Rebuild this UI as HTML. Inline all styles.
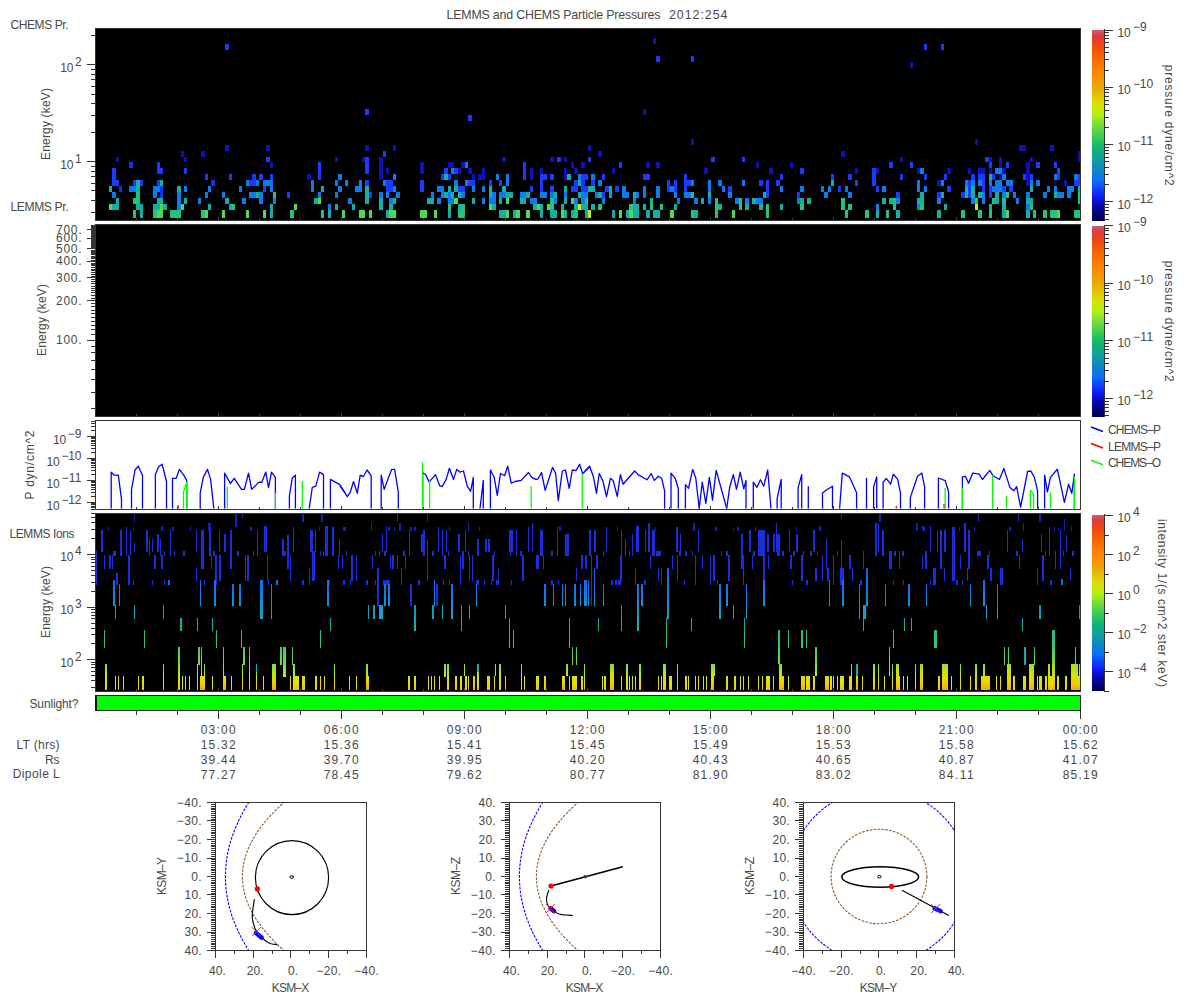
<!DOCTYPE html>
<html><head><meta charset="utf-8"><style>
html,body{margin:0;padding:0;background:#fff;width:1200px;height:1000px;overflow:hidden}
svg{display:block}
text{font-family:"Liberation Sans", sans-serif;}
</style></head><body>
<svg width="1200" height="1000" viewBox="0 0 1200 1000" shape-rendering="crispEdges">
<text x="446.5" y="18.8" font-size="12.4" textLength="214.0" lengthAdjust="spacing" fill="#484848">LEMMS and CHEMS Particle Pressures</text>
<text x="669.0" y="18.8" font-size="12.4" textLength="58.5" lengthAdjust="spacing" fill="#484848">2012:254</text>
<rect x="95" y="28" width="986" height="193" fill="#000"/>
<g shape-rendering="crispEdges">
<path fill="#12b0a4" d="M109 186h3v6h-3zM112 204h4v6h-4zM116 198h3v6h-3zM116 204h3v6h-3zM136 180h4v6h-4zM136 186h4v6h-4zM136 204h4v6h-4zM140 204h3v6h-3zM140 210h3v8h-3zM153 204h4v6h-4zM157 198h3v6h-3zM157 204h3v6h-3zM160 180h3v6h-3zM160 198h3v6h-3zM163 204h4v6h-4zM177 186h4v6h-4zM184 198h3v6h-3zM208 204h3v6h-3zM225 198h4v6h-4zM229 204h3v6h-3zM256 192h3v6h-3zM270 204h3v6h-3zM270 210h3v8h-3zM314 198h4v6h-4zM321 186h3v6h-3zM328 210h3v8h-3zM335 204h3v6h-3zM352 204h3v6h-3zM365 186h4v6h-4zM365 192h4v6h-4zM365 198h4v6h-4zM379 198h4v6h-4zM379 204h4v6h-4zM386 210h3v8h-3zM389 204h4v6h-4zM393 198h3v6h-3zM427 198h4v6h-4zM431 198h3v6h-3zM444 174h4v6h-4zM444 192h4v6h-4zM448 186h3v6h-3zM448 210h3v8h-3zM451 192h3v6h-3zM454 186h4v6h-4zM458 192h3v6h-3zM458 204h3v6h-3zM472 198h3v6h-3zM489 186h3v6h-3zM489 192h3v6h-3zM492 204h4v6h-4zM499 198h3v6h-3zM499 210h3v8h-3zM502 186h4v6h-4zM502 210h4v8h-4zM506 192h3v6h-3zM509 192h4v6h-4zM513 210h3v8h-3zM520 198h3v6h-3zM523 198h3v6h-3zM526 192h4v6h-4zM533 204h4v6h-4zM540 204h3v6h-3zM540 210h3v8h-3zM550 210h4v8h-4zM554 192h3v6h-3zM554 210h3v8h-3zM561 204h3v6h-3zM564 186h3v6h-3zM564 198h3v6h-3zM564 210h3v8h-3zM567 174h4v6h-4zM571 210h3v8h-3zM574 204h4v6h-4zM578 180h3v6h-3zM578 192h3v6h-3zM581 204h4v6h-4zM585 204h3v6h-3zM585 210h3v8h-3zM588 186h3v6h-3zM591 186h4v6h-4zM591 204h4v6h-4zM598 192h4v6h-4zM609 186h3v6h-3zM609 192h3v6h-3zM612 210h3v8h-3zM626 210h3v8h-3zM633 192h3v6h-3zM633 204h3v6h-3zM633 210h3v8h-3zM636 204h3v6h-3zM636 210h3v8h-3zM643 204h3v6h-3zM646 210h4v8h-4zM650 198h3v6h-3zM653 210h3v8h-3zM656 210h4v8h-4zM674 204h3v6h-3zM694 210h4v8h-4zM701 198h3v6h-3zM708 192h3v6h-3zM718 204h4v6h-4zM745 204h4v6h-4zM752 198h4v6h-4zM759 204h4v6h-4zM763 192h3v6h-3zM780 204h3v6h-3zM800 198h4v6h-4zM807 198h4v6h-4zM831 180h3v6h-3zM876 210h3v8h-3zM882 198h4v6h-4zM889 198h4v6h-4zM896 210h4v8h-4zM917 198h3v6h-3zM920 192h4v6h-4zM920 198h4v6h-4zM937 210h4v8h-4zM941 192h3v6h-3zM944 204h3v6h-3zM965 186h3v6h-3zM965 192h3v6h-3zM971 186h4v6h-4zM971 192h4v6h-4zM978 192h4v6h-4zM989 174h3v6h-3zM989 204h3v6h-3zM995 192h4v6h-4zM995 198h4v6h-4zM1002 204h4v6h-4zM1002 210h4v8h-4zM1026 198h4v6h-4zM1026 210h4v8h-4zM1030 186h3v6h-3zM1030 198h3v6h-3zM1054 192h3v6h-3zM1078 186h2v6h-2z"/>
<path fill="#50d850" d="M109 204h3v6h-3zM157 210h3v8h-3zM160 204h3v6h-3zM160 210h3v8h-3zM181 204h3v6h-3zM205 210h3v8h-3zM222 210h3v8h-3zM246 210h3v8h-3zM263 210h3v8h-3zM294 204h3v6h-3zM318 198h3v6h-3zM342 210h3v8h-3zM359 210h3v8h-3zM362 210h3v8h-3zM369 210h3v8h-3zM389 210h4v8h-4zM393 210h3v8h-3zM420 210h4v8h-4zM424 210h3v8h-3zM434 210h3v8h-3zM454 198h4v6h-4zM489 204h3v6h-3zM506 198h3v6h-3zM506 210h3v8h-3zM516 210h4v8h-4zM526 210h4v8h-4zM537 204h3v6h-3zM547 204h3v6h-3zM561 210h3v8h-3zM571 198h3v6h-3zM619 210h3v8h-3zM629 210h4v8h-4zM670 210h4v8h-4zM732 210h3v8h-3zM1006 210h3v8h-3zM1057 210h3v8h-3z"/>
<path fill="#1a3aff" d="M112 168h4v6h-4zM112 174h4v6h-4zM112 180h4v6h-4zM116 180h3v6h-3zM133 180h3v6h-3zM140 180h3v6h-3zM157 162h3v6h-3zM157 168h3v6h-3zM157 180h3v6h-3zM160 168h3v6h-3zM184 168h3v6h-3zM205 174h3v6h-3zM225 44h4v6h-4zM229 174h3v6h-3zM249 180h3v6h-3zM252 174h4v6h-4zM252 180h4v6h-4zM259 174h4v6h-4zM263 186h3v6h-3zM266 157h4v5h-4zM270 174h3v6h-3zM287 192h3v6h-3zM318 162h3v6h-3zM318 168h3v6h-3zM318 174h3v6h-3zM365 157h4v5h-4zM365 162h4v6h-4zM365 168h4v6h-4zM365 180h4v6h-4zM365 109h4v6h-4zM369 192h3v6h-3zM383 151h3v6h-3zM386 180h3v6h-3zM386 186h3v6h-3zM389 180h4v6h-4zM389 186h4v6h-4zM420 180h4v6h-4zM420 186h4v6h-4zM441 174h3v6h-3zM444 168h4v6h-4zM448 174h3v6h-3zM454 168h4v6h-4zM458 186h3v6h-3zM461 186h4v6h-4zM468 180h4v6h-4zM468 115h4v6h-4zM472 180h3v6h-3zM489 180h3v6h-3zM499 180h3v6h-3zM523 162h3v6h-3zM523 168h3v6h-3zM523 174h3v6h-3zM530 186h3v6h-3zM540 174h3v6h-3zM540 180h3v6h-3zM540 186h3v6h-3zM543 174h4v6h-4zM550 174h4v6h-4zM550 186h4v6h-4zM557 157h4v5h-4zM571 186h3v6h-3zM574 180h4v6h-4zM574 186h4v6h-4zM581 174h4v6h-4zM581 180h4v6h-4zM581 186h4v6h-4zM585 174h3v6h-3zM585 186h3v6h-3zM588 157h3v5h-3zM591 180h4v6h-4zM602 174h3v6h-3zM602 192h3v6h-3zM605 186h4v6h-4zM615 186h4v6h-4zM619 162h3v6h-3zM643 174h3v6h-3zM646 174h4v6h-4zM656 56h4v6h-4zM667 180h3v6h-3zM667 186h3v6h-3zM674 180h3v6h-3zM674 186h3v6h-3zM684 174h3v6h-3zM684 180h3v6h-3zM684 186h3v6h-3zM687 180h4v6h-4zM691 56h3v6h-3zM711 157h4v5h-4zM728 186h4v6h-4zM742 157h3v5h-3zM759 180h4v6h-4zM766 180h3v6h-3zM766 186h3v6h-3zM766 192h3v6h-3zM776 180h4v6h-4zM780 174h3v6h-3zM797 192h3v6h-3zM800 168h4v6h-4zM831 174h3v6h-3zM838 186h3v6h-3zM848 174h4v6h-4zM855 180h3v6h-3zM872 168h4v6h-4zM872 174h4v6h-4zM872 180h4v6h-4zM876 186h3v6h-3zM889 162h4v6h-4zM896 192h4v6h-4zM900 174h3v6h-3zM910 162h3v6h-3zM924 174h3v6h-3zM924 44h3v6h-3zM937 192h4v6h-4zM941 44h3v6h-3zM944 174h3v6h-3zM947 186h4v6h-4zM961 192h4v6h-4zM968 180h3v6h-3zM968 186h3v6h-3zM968 192h3v6h-3zM971 174h4v6h-4zM978 174h4v6h-4zM982 174h3v6h-3zM982 180h3v6h-3zM982 186h3v6h-3zM985 157h4v5h-4zM989 162h3v6h-3zM989 186h3v6h-3zM989 192h3v6h-3zM992 174h3v6h-3zM1002 186h4v6h-4zM1006 162h3v6h-3zM1009 186h4v6h-4zM1023 174h3v6h-3zM1030 174h3v6h-3zM1036 162h4v6h-4zM1054 162h3v6h-3zM1057 168h3v6h-3zM1057 174h3v6h-3zM1074 180h4v6h-4zM1078 174h2v6h-2zM1078 180h2v6h-2z"/>
<path fill="#0a7cf0" d="M112 192h4v6h-4zM129 186h4v6h-4zM133 186h3v6h-3zM153 186h4v6h-4zM153 192h4v6h-4zM157 186h3v6h-3zM177 192h4v6h-4zM177 198h4v6h-4zM177 204h4v6h-4zM184 186h3v6h-3zM198 198h3v6h-3zM205 192h3v6h-3zM208 186h3v6h-3zM222 192h3v6h-3zM239 186h3v6h-3zM242 198h4v6h-4zM246 180h3v6h-3zM249 192h3v6h-3zM252 192h4v6h-4zM256 180h3v6h-3zM259 192h4v6h-4zM259 198h4v6h-4zM263 180h3v6h-3zM266 180h4v6h-4zM270 180h3v6h-3zM270 186h3v6h-3zM273 198h3v6h-3zM311 180h3v6h-3zM311 186h3v6h-3zM318 192h3v6h-3zM328 204h3v6h-3zM335 180h3v6h-3zM335 192h3v6h-3zM338 174h4v6h-4zM338 186h4v6h-4zM345 180h3v6h-3zM348 198h4v6h-4zM355 186h4v6h-4zM359 180h3v6h-3zM359 186h3v6h-3zM379 192h4v6h-4zM383 180h3v6h-3zM386 192h3v6h-3zM389 198h4v6h-4zM393 174h3v6h-3zM393 186h3v6h-3zM396 192h4v6h-4zM431 192h3v6h-3zM437 186h4v6h-4zM437 198h4v6h-4zM441 186h3v6h-3zM441 192h3v6h-3zM448 192h3v6h-3zM448 198h3v6h-3zM451 168h3v6h-3zM451 198h3v6h-3zM454 180h4v6h-4zM461 192h4v6h-4zM465 162h3v6h-3zM465 180h3v6h-3zM472 186h3v6h-3zM482 186h3v6h-3zM482 198h3v6h-3zM489 198h3v6h-3zM492 192h4v6h-4zM492 198h4v6h-4zM496 174h3v6h-3zM499 192h3v6h-3zM502 192h4v6h-4zM506 174h3v6h-3zM506 180h3v6h-3zM520 192h3v6h-3zM523 192h3v6h-3zM530 198h3v6h-3zM533 198h4v6h-4zM540 192h3v6h-3zM543 192h4v6h-4zM550 192h4v6h-4zM554 198h3v6h-3zM564 192h3v6h-3zM574 198h4v6h-4zM578 174h3v6h-3zM581 192h4v6h-4zM581 198h4v6h-4zM585 192h3v6h-3zM591 174h4v6h-4zM595 192h3v6h-3zM598 180h4v6h-4zM602 198h3v6h-3zM622 186h4v6h-4zM622 192h4v6h-4zM626 192h3v6h-3zM633 198h3v6h-3zM636 192h3v6h-3zM643 186h3v6h-3zM643 192h3v6h-3zM656 186h4v6h-4zM656 192h4v6h-4zM670 186h4v6h-4zM674 192h3v6h-3zM677 198h3v6h-3zM684 192h3v6h-3zM687 192h4v6h-4zM691 180h3v6h-3zM694 198h4v6h-4zM708 180h3v6h-3zM708 186h3v6h-3zM708 198h3v6h-3zM718 180h4v6h-4zM722 186h3v6h-3zM728 192h4v6h-4zM735 198h4v6h-4zM742 180h3v6h-3zM745 198h4v6h-4zM756 198h3v6h-3zM759 198h4v6h-4zM780 186h3v6h-3zM797 198h3v6h-3zM800 186h4v6h-4zM821 186h3v6h-3zM824 192h4v6h-4zM828 186h3v6h-3zM845 186h3v6h-3zM848 192h4v6h-4zM876 204h3v6h-3zM882 186h4v6h-4zM896 198h4v6h-4zM917 180h3v6h-3zM917 186h3v6h-3zM917 204h3v6h-3zM920 168h4v6h-4zM924 186h3v6h-3zM937 198h4v6h-4zM941 180h3v6h-3zM965 180h3v6h-3zM971 180h4v6h-4zM971 198h4v6h-4zM978 180h4v6h-4zM982 192h3v6h-3zM982 198h3v6h-3zM989 180h3v6h-3zM992 186h3v6h-3zM995 168h4v6h-4zM995 180h4v6h-4zM995 186h4v6h-4zM999 168h3v6h-3zM999 180h3v6h-3zM999 186h3v6h-3zM1002 174h4v6h-4zM1002 192h4v6h-4zM1006 180h3v6h-3zM1009 180h4v6h-4zM1013 192h3v6h-3zM1016 198h3v6h-3zM1026 192h4v6h-4zM1026 204h4v6h-4zM1030 180h3v6h-3zM1036 180h4v6h-4zM1043 192h4v6h-4zM1047 186h3v6h-3zM1054 174h3v6h-3zM1054 186h3v6h-3zM1057 192h3v6h-3zM1060 192h4v6h-4zM1067 186h4v6h-4zM1067 192h4v6h-4zM1071 186h3v6h-3zM1074 174h4v6h-4z"/>
<path fill="#1010b8" d="M116 157h3v5h-3zM181 151h3v6h-3zM184 157h3v5h-3zM201 151h4v6h-4zM225 145h4v6h-4zM266 145h4v6h-4zM270 162h3v6h-3zM307 174h4v6h-4zM335 157h3v5h-3zM362 157h3v5h-3zM365 145h4v6h-4zM379 157h4v5h-4zM379 162h4v6h-4zM379 168h4v6h-4zM379 174h4v6h-4zM386 168h3v6h-3zM393 145h3v6h-3zM420 162h4v6h-4zM420 168h4v6h-4zM448 162h3v6h-3zM451 162h3v6h-3zM458 168h3v6h-3zM461 162h4v6h-4zM468 168h4v6h-4zM472 174h3v6h-3zM478 174h4v6h-4zM482 168h3v6h-3zM482 174h3v6h-3zM502 157h4v5h-4zM530 168h3v6h-3zM530 174h3v6h-3zM540 168h3v6h-3zM550 157h4v5h-4zM564 157h3v5h-3zM564 168h3v6h-3zM564 174h3v6h-3zM571 162h3v6h-3zM574 168h4v6h-4zM581 162h4v6h-4zM588 145h3v6h-3zM598 151h4v6h-4zM612 168h3v6h-3zM643 109h3v6h-3zM646 162h4v6h-4zM653 38h3v6h-3zM656 162h4v6h-4zM691 139h3v6h-3zM704 168h4v6h-4zM756 162h3v6h-3zM769 168h4v6h-4zM790 162h3v6h-3zM841 151h4v6h-4zM855 168h3v6h-3zM876 168h3v6h-3zM900 157h3v5h-3zM910 62h3v6h-3zM917 168h3v6h-3zM937 180h4v6h-4zM947 168h4v6h-4zM968 168h3v6h-3zM975 139h3v6h-3zM978 168h4v6h-4zM982 168h3v6h-3zM989 157h3v5h-3zM989 168h3v6h-3zM999 157h3v5h-3zM999 162h3v6h-3zM999 174h3v6h-3zM1002 168h4v6h-4zM1019 145h4v6h-4zM1023 145h3v6h-3zM1026 162h4v6h-4zM1026 168h4v6h-4zM1026 174h4v6h-4zM1026 180h4v6h-4zM1030 157h3v5h-3zM1050 145h4v6h-4zM1064 180h3v6h-3zM1078 151h2v6h-2zM1078 157h2v5h-2z"/>
<path fill="#1430f0" d="M119 186h3v6h-3zM129 162h4v6h-4zM160 186h3v6h-3zM160 192h3v6h-3zM211 180h4v6h-4z"/>
<path fill="#20c47c" d="M133 198h3v6h-3zM133 210h3v8h-3zM136 192h4v6h-4zM136 198h4v6h-4zM153 210h4v8h-4zM170 210h4v8h-4zM174 210h3v8h-3zM177 210h4v8h-4zM201 210h4v8h-4zM232 204h3v6h-3zM273 192h3v6h-3zM290 210h4v8h-4zM321 210h3v8h-3zM448 204h3v6h-3zM458 210h3v8h-3zM461 204h4v6h-4zM461 210h4v8h-4zM550 198h4v6h-4zM550 204h4v6h-4zM574 210h4v8h-4zM585 198h3v6h-3zM598 204h4v6h-4zM629 204h4v6h-4zM650 204h3v6h-3zM660 204h3v6h-3zM691 192h3v6h-3zM691 210h3v8h-3zM715 198h3v6h-3zM715 204h3v6h-3zM715 210h3v8h-3zM739 198h3v6h-3zM739 204h3v6h-3zM766 204h3v6h-3zM766 210h3v8h-3zM800 204h4v6h-4zM841 198h4v6h-4zM841 204h4v6h-4zM845 210h3v8h-3zM848 204h4v6h-4zM865 210h4v8h-4zM886 210h3v8h-3zM893 198h3v6h-3zM893 204h3v6h-3zM920 204h4v6h-4zM961 210h4v8h-4zM975 198h3v6h-3zM978 210h4v8h-4zM989 210h3v8h-3zM992 198h3v6h-3zM1002 198h4v6h-4zM1006 192h3v6h-3zM1030 204h3v6h-3zM1033 210h3v8h-3zM1043 210h4v8h-4zM1050 210h4v8h-4zM1054 210h3v8h-3zM1074 210h4v8h-4zM1078 192h2v6h-2zM1078 198h2v6h-2zM1078 210h2v8h-2z"/>
<path fill="#c0f010" d="M578 204h3v6h-3zM588 210h3v8h-3zM975 204h3v6h-3z"/>
</g>
<rect x="95.5" y="28.5" width="985" height="192" fill="none" stroke="#333"/>
<line x1="91" y1="212.5" x2="95" y2="212.5" stroke="#333" stroke-width="1"/>
<line x1="91" y1="200.5" x2="95" y2="200.5" stroke="#333" stroke-width="1"/>
<line x1="91" y1="190.5" x2="95" y2="190.5" stroke="#333" stroke-width="1"/>
<line x1="91" y1="183.5" x2="95" y2="183.5" stroke="#333" stroke-width="1"/>
<line x1="91" y1="176.5" x2="95" y2="176.5" stroke="#333" stroke-width="1"/>
<line x1="91" y1="171.5" x2="95" y2="171.5" stroke="#333" stroke-width="1"/>
<line x1="91" y1="166.5" x2="95" y2="166.5" stroke="#333" stroke-width="1"/>
<line x1="87" y1="161.5" x2="95" y2="161.5" stroke="#333" stroke-width="1"/>
<line x1="91" y1="132.5" x2="95" y2="132.5" stroke="#333" stroke-width="1"/>
<line x1="91" y1="115.5" x2="95" y2="115.5" stroke="#333" stroke-width="1"/>
<line x1="91" y1="103.5" x2="95" y2="103.5" stroke="#333" stroke-width="1"/>
<line x1="91" y1="94.5" x2="95" y2="94.5" stroke="#333" stroke-width="1"/>
<line x1="91" y1="86.5" x2="95" y2="86.5" stroke="#333" stroke-width="1"/>
<line x1="91" y1="79.5" x2="95" y2="79.5" stroke="#333" stroke-width="1"/>
<line x1="91" y1="74.5" x2="95" y2="74.5" stroke="#333" stroke-width="1"/>
<line x1="91" y1="69.5" x2="95" y2="69.5" stroke="#333" stroke-width="1"/>
<line x1="87" y1="64.5" x2="95" y2="64.5" stroke="#333" stroke-width="1"/>
<line x1="91" y1="35.5" x2="95" y2="35.5" stroke="#333" stroke-width="1"/>
<text x="60.2" y="71.8" font-size="12" textLength="13.2" lengthAdjust="spacing" fill="#484848">10</text>
<text x="75.0" y="65.8" font-size="12" textLength="5.3" lengthAdjust="spacing" fill="#484848">2</text>
<text x="60.2" y="168.6" font-size="12" textLength="13.2" lengthAdjust="spacing" fill="#484848">10</text>
<text x="75.0" y="162.6" font-size="12" textLength="5.3" lengthAdjust="spacing" fill="#484848">1</text>
<text x="50.0" y="124.0" font-size="12" text-anchor="middle" textLength="72.0" lengthAdjust="spacing" transform="rotate(-90 50 124)" fill="#484848">Energy (keV)</text>
<text x="10.5" y="29.3" font-size="12" textLength="58.0" lengthAdjust="spacing" fill="#484848">CHEMS Pr.</text>
<text x="10.5" y="211.3" font-size="12" textLength="58.0" lengthAdjust="spacing" fill="#484848">LEMMS Pr.</text>
<rect x="95" y="224" width="986" height="193" fill="#000"/>
<rect x="95.5" y="224.5" width="985" height="192" fill="none" stroke="#333"/>
<line x1="91" y1="408.5" x2="95" y2="408.5" stroke="#333" stroke-width="1"/>
<line x1="91" y1="392.5" x2="95" y2="392.5" stroke="#333" stroke-width="1"/>
<line x1="91" y1="379.5" x2="95" y2="379.5" stroke="#333" stroke-width="1"/>
<line x1="91" y1="369.5" x2="95" y2="369.5" stroke="#333" stroke-width="1"/>
<line x1="91" y1="360.5" x2="95" y2="360.5" stroke="#333" stroke-width="1"/>
<line x1="91" y1="352.5" x2="95" y2="352.5" stroke="#333" stroke-width="1"/>
<line x1="91" y1="346.5" x2="95" y2="346.5" stroke="#333" stroke-width="1"/>
<line x1="87" y1="340.5" x2="95" y2="340.5" stroke="#333" stroke-width="1"/>
<line x1="91" y1="334.5" x2="95" y2="334.5" stroke="#333" stroke-width="1"/>
<line x1="91" y1="329.5" x2="95" y2="329.5" stroke="#333" stroke-width="1"/>
<line x1="91" y1="325.5" x2="95" y2="325.5" stroke="#333" stroke-width="1"/>
<line x1="91" y1="321.5" x2="95" y2="321.5" stroke="#333" stroke-width="1"/>
<line x1="91" y1="317.5" x2="95" y2="317.5" stroke="#333" stroke-width="1"/>
<line x1="91" y1="313.5" x2="95" y2="313.5" stroke="#333" stroke-width="1"/>
<line x1="91" y1="310.5" x2="95" y2="310.5" stroke="#333" stroke-width="1"/>
<line x1="91" y1="306.5" x2="95" y2="306.5" stroke="#333" stroke-width="1"/>
<line x1="91" y1="303.5" x2="95" y2="303.5" stroke="#333" stroke-width="1"/>
<line x1="87" y1="300.5" x2="95" y2="300.5" stroke="#333" stroke-width="1"/>
<line x1="91" y1="298.5" x2="95" y2="298.5" stroke="#333" stroke-width="1"/>
<line x1="91" y1="295.5" x2="95" y2="295.5" stroke="#333" stroke-width="1"/>
<line x1="91" y1="292.5" x2="95" y2="292.5" stroke="#333" stroke-width="1"/>
<line x1="91" y1="290.5" x2="95" y2="290.5" stroke="#333" stroke-width="1"/>
<line x1="91" y1="288.5" x2="95" y2="288.5" stroke="#333" stroke-width="1"/>
<line x1="91" y1="286.5" x2="95" y2="286.5" stroke="#333" stroke-width="1"/>
<line x1="91" y1="283.5" x2="95" y2="283.5" stroke="#333" stroke-width="1"/>
<line x1="91" y1="281.5" x2="95" y2="281.5" stroke="#333" stroke-width="1"/>
<line x1="91" y1="279.5" x2="95" y2="279.5" stroke="#333" stroke-width="1"/>
<line x1="87" y1="277.5" x2="95" y2="277.5" stroke="#333" stroke-width="1"/>
<line x1="91" y1="276.5" x2="95" y2="276.5" stroke="#333" stroke-width="1"/>
<line x1="91" y1="274.5" x2="95" y2="274.5" stroke="#333" stroke-width="1"/>
<line x1="91" y1="272.5" x2="95" y2="272.5" stroke="#333" stroke-width="1"/>
<line x1="91" y1="270.5" x2="95" y2="270.5" stroke="#333" stroke-width="1"/>
<line x1="91" y1="269.5" x2="95" y2="269.5" stroke="#333" stroke-width="1"/>
<line x1="91" y1="267.5" x2="95" y2="267.5" stroke="#333" stroke-width="1"/>
<line x1="91" y1="265.5" x2="95" y2="265.5" stroke="#333" stroke-width="1"/>
<line x1="91" y1="264.5" x2="95" y2="264.5" stroke="#333" stroke-width="1"/>
<line x1="91" y1="263.5" x2="95" y2="263.5" stroke="#333" stroke-width="1"/>
<line x1="87" y1="261.5" x2="95" y2="261.5" stroke="#333" stroke-width="1"/>
<line x1="91" y1="260.5" x2="95" y2="260.5" stroke="#333" stroke-width="1"/>
<line x1="91" y1="258.5" x2="95" y2="258.5" stroke="#333" stroke-width="1"/>
<line x1="91" y1="257.5" x2="95" y2="257.5" stroke="#333" stroke-width="1"/>
<line x1="91" y1="256.5" x2="95" y2="256.5" stroke="#333" stroke-width="1"/>
<line x1="91" y1="254.5" x2="95" y2="254.5" stroke="#333" stroke-width="1"/>
<line x1="91" y1="253.5" x2="95" y2="253.5" stroke="#333" stroke-width="1"/>
<line x1="91" y1="252.5" x2="95" y2="252.5" stroke="#333" stroke-width="1"/>
<line x1="91" y1="251.5" x2="95" y2="251.5" stroke="#333" stroke-width="1"/>
<line x1="91" y1="250.5" x2="95" y2="250.5" stroke="#333" stroke-width="1"/>
<line x1="87" y1="248.5" x2="95" y2="248.5" stroke="#333" stroke-width="1"/>
<line x1="91" y1="247.5" x2="95" y2="247.5" stroke="#333" stroke-width="1"/>
<line x1="91" y1="246.5" x2="95" y2="246.5" stroke="#333" stroke-width="1"/>
<line x1="91" y1="245.5" x2="95" y2="245.5" stroke="#333" stroke-width="1"/>
<line x1="91" y1="244.5" x2="95" y2="244.5" stroke="#333" stroke-width="1"/>
<line x1="91" y1="243.5" x2="95" y2="243.5" stroke="#333" stroke-width="1"/>
<line x1="91" y1="242.5" x2="95" y2="242.5" stroke="#333" stroke-width="1"/>
<line x1="91" y1="241.5" x2="95" y2="241.5" stroke="#333" stroke-width="1"/>
<line x1="91" y1="240.5" x2="95" y2="240.5" stroke="#333" stroke-width="1"/>
<line x1="91" y1="239.5" x2="95" y2="239.5" stroke="#333" stroke-width="1"/>
<line x1="87" y1="238.5" x2="95" y2="238.5" stroke="#333" stroke-width="1"/>
<line x1="91" y1="237.5" x2="95" y2="237.5" stroke="#333" stroke-width="1"/>
<line x1="91" y1="236.5" x2="95" y2="236.5" stroke="#333" stroke-width="1"/>
<line x1="91" y1="235.5" x2="95" y2="235.5" stroke="#333" stroke-width="1"/>
<line x1="91" y1="234.5" x2="95" y2="234.5" stroke="#333" stroke-width="1"/>
<line x1="91" y1="234.5" x2="95" y2="234.5" stroke="#333" stroke-width="1"/>
<line x1="91" y1="233.5" x2="95" y2="233.5" stroke="#333" stroke-width="1"/>
<line x1="91" y1="232.5" x2="95" y2="232.5" stroke="#333" stroke-width="1"/>
<line x1="91" y1="231.5" x2="95" y2="231.5" stroke="#333" stroke-width="1"/>
<line x1="91" y1="230.5" x2="95" y2="230.5" stroke="#333" stroke-width="1"/>
<line x1="87" y1="229.5" x2="95" y2="229.5" stroke="#333" stroke-width="1"/>
<line x1="91" y1="229.5" x2="95" y2="229.5" stroke="#333" stroke-width="1"/>
<line x1="91" y1="228.5" x2="95" y2="228.5" stroke="#333" stroke-width="1"/>
<line x1="91" y1="227.5" x2="95" y2="227.5" stroke="#333" stroke-width="1"/>
<line x1="91" y1="226.5" x2="95" y2="226.5" stroke="#333" stroke-width="1"/>
<line x1="91" y1="225.5" x2="95" y2="225.5" stroke="#333" stroke-width="1"/>
<line x1="91" y1="225.5" x2="95" y2="225.5" stroke="#333" stroke-width="1"/>
<text x="81.5" y="344.1" font-size="12" text-anchor="end" textLength="25.5" lengthAdjust="spacing" fill="#484848">100.</text>
<text x="81.5" y="304.7" font-size="12" text-anchor="end" textLength="25.5" lengthAdjust="spacing" fill="#484848">200.</text>
<text x="81.5" y="281.7" font-size="12" text-anchor="end" textLength="25.5" lengthAdjust="spacing" fill="#484848">300.</text>
<text x="81.5" y="265.4" font-size="12" text-anchor="end" textLength="25.5" lengthAdjust="spacing" fill="#484848">400.</text>
<text x="81.5" y="252.7" font-size="12" text-anchor="end" textLength="25.5" lengthAdjust="spacing" fill="#484848">500.</text>
<text x="81.5" y="242.4" font-size="12" text-anchor="end" textLength="25.5" lengthAdjust="spacing" fill="#484848">600.</text>
<text x="81.5" y="233.6" font-size="12" text-anchor="end" textLength="25.5" lengthAdjust="spacing" fill="#484848">700.</text>
<text x="46.0" y="320.0" font-size="12" text-anchor="middle" textLength="72.0" lengthAdjust="spacing" transform="rotate(-90 46 320)" fill="#484848">Energy (keV)</text>
<rect x="95.5" y="420.5" width="985" height="89" fill="#fff" stroke="#333"/>
<g shape-rendering="auto" fill="none" stroke-width="1.3" stroke-linejoin="round">
<path d="M111.2,508.5 L111.2,472.1 L114.2,475.2 L118.3,475.2 L121.5,499.2 L121.5,508.5" stroke="#0000ff"/>
<path d="M131.5,508.5 L131.5,489.8 L135.0,470.0 L138.3,466.2 L142.5,475.2 L142.5,508.5" stroke="#0000ff"/>
<path d="M155.4,508.5 L155.4,474.6 L158.5,466.9 L162.1,464.2 L166.5,481.5 L166.5,508.5" stroke="#0000ff"/>
<path d="M172.5,508.5 L172.5,478.3 L176.2,478.3 L179.4,469.4 L183.5,474.6 L186.7,480.4 L186.7,508.5" stroke="#0000ff"/>
<path d="M200.2,508.5 L200.2,492.9 L203.3,477.3 L207.5,469.4 L210.6,479.4 L213.8,508.5" stroke="#0000ff"/>
<path d="M224.6,508.5 L224.6,473.1 L230.4,483.5 L234.2,478.3 L241.5,489.4 L244.4,489.4 L248.5,473.1 L251.7,489.4 L259.0,482.1 L261.7,482.5 L265.8,472.1 L268.5,487.7 L271.5,472.1 L275.4,477.3 L275.4,508.5" stroke="#0000ff"/>
<path d="M289.4,508.5 L289.4,496.0 L292.3,477.9 L295.4,475.2 L295.4,508.5" stroke="#0000ff"/>
<path d="M309.2,508.5 L312.3,487.3 L315.8,486.2 L319.6,472.1 L323.5,474.6 L323.5,508.5" stroke="#0000ff"/>
<path d="M330.4,508.5 L330.4,479.4 L339.8,484.6 L345.0,492.9" stroke="#0000ff"/>
<path d="M340.0,485.6 L347.3,496.7 L350.4,491.9 L353.5,481.5 L357.3,493.3 L360.2,475.2 L363.3,476.7 L367.1,470.0 L371.2,475.8 L371.2,508.5" stroke="#0000ff"/>
<path d="M381.2,508.5 L381.2,475.2 L384.2,489.4 L389.0,476.2 L391.7,469.4 L394.6,469.4 L398.3,491.9 L398.3,508.5" stroke="#0000ff"/>
<path d="M422.7,508.5 L422.7,472.7 L425.4,474.2 L429.2,482.1 L435.4,474.6 L439.6,485.6 L442.1,486.7 L446.2,479.4 L449.4,468.3 L453.5,479.4 L456.7,469.4 L459.8,472.1 L463.5,471.0 L467.1,485.6 L470.6,491.5 L473.3,477.3 L473.3,508.5" stroke="#0000ff"/>
<path d="M480.0,508.5 L483.3,480.4 L483.3,508.5" stroke="#0000ff"/>
<path d="M490.4,508.5 L490.4,470.0 L494.2,477.3 L497.3,495.4 L500.4,473.5 L504.6,475.8 L507.7,466.2 L511.2,483.1 L515.0,481.5 L521.2,480.4 L528.5,472.5 L531.7,477.3 L535.8,479.4 L537.9,479.0 L541.5,472.5 L545.2,490.4 L552.5,467.5 L555.6,473.1 L558.3,500.6 L562.3,471.0 L565.4,470.0 L569.2,488.3 L572.3,470.0 L576.0,470.6 L579.6,464.2 L582.7,473.8 L590.0,466.2" stroke="#0000ff"/>
<path d="M585.0,471.0 L589.6,466.2 L593.3,476.2 L596.5,493.3 L599.2,473.5 L602.7,480.4 L606.5,496.5 L610.4,478.3 L613.1,480.4 L617.3,496.5 L620.4,474.6 L623.1,484.2 L634.6,471.0 L638.1,474.6 L647.1,479.8 L651.2,473.5 L654.4,480.4 L658.3,476.2 L661.7,478.3 L664.6,490.8 L664.6,508.5" stroke="#0000ff"/>
<path d="M671.0,508.5 L671.0,473.1 L675.2,478.3 L678.3,488.8 L678.3,508.5" stroke="#0000ff"/>
<path d="M685.4,508.5 L685.4,484.6 L688.5,488.3 L692.7,469.4 L695.8,478.3 L699.2,508.5 L702.3,482.1 L705.8,503.3 L709.4,477.3 L712.5,500.2 L716.2,470.4 L726.7,508.5" stroke="#0000ff"/>
<path d="M726.7,508.5 L729.8,486.7 L733.3,474.6 L736.5,489.4 L740.2,472.1 L743.8,488.8 L746.0,480.4 L746.0,508.5" stroke="#0000ff"/>
<path d="M753.3,508.5 L753.3,482.1 L756.9,487.3 L760.4,479.8 L763.8,486.2 L767.7,470.0 L771.0,508.5" stroke="#0000ff"/>
<path d="M777.1,508.5 L777.1,498.8 L781.2,479.4 L781.2,508.5" stroke="#0000ff"/>
<path d="M798.1,508.5 L798.1,487.7 L801.7,474.6 L801.7,508.5" stroke="#0000ff"/>
<path d="M808.3,508.5 L808.3,486.2" stroke="#0000ff"/>
<path d="M822.5,508.5 L822.5,492.9 L826.7,489.8 L832.5,486.2 L832.5,508.5" stroke="#0000ff"/>
<path d="M839.6,508.5 L842.3,473.1 L849.5,476.9 L856.6,492.7 L856.6,508.5" stroke="#0000ff"/>
<path d="M866.5,508.5 L866.5,477.8" stroke="#0000ff"/>
<path d="M873.6,508.5 L873.6,486.9 L876.7,476.9 L876.7,508.5" stroke="#0000ff"/>
<path d="M883.1,508.5 L883.1,482.3 L886.3,478.4 L890.6,484.2 L893.3,474.2 L897.6,479.1 L900.5,493.3 L900.5,508.5" stroke="#0000ff"/>
<path d="M910.3,508.5 L910.3,497.6 L917.5,476.3 L921.8,473.1 L924.6,486.9 L924.6,508.5" stroke="#0000ff"/>
<path d="M938.4,508.5 L938.4,478.0 L945.2,480.6 L948.6,491.8 L948.6,508.5" stroke="#0000ff"/>
<path d="M962.4,508.5 L962.4,476.9 L965.4,476.3 L968.5,483.3 L972.8,473.1 L979.2,474.2 L982.4,479.5 L989.8,470.4 L993.0,475.7 L999.4,479.5 L1003.8,468.4 L1010.0,487.6 L1013.8,490.8 L1016.6,486.5 L1020.6,507.1 L1027.6,471.4 L1030.8,471.0 L1034.4,477.4 L1037.6,491.2 L1037.6,508.5" stroke="#0000ff"/>
<path d="M1044.6,508.5 L1044.6,475.2 L1047.4,491.8 L1050.4,477.4 L1057.4,469.3 L1064.4,502.4 L1068.6,484.2 L1071.8,493.3 L1074.4,474.2 L1074.4,508.5" stroke="#0000ff"/>
<path d="M178.3,508.5 L178.3,505.0" stroke="#ff0000"/>
<path d="M201.2,508.5 L201.2,507.9" stroke="#ff0000"/>
<path d="M896.3,508.5 L896.3,506.1" stroke="#ff0000"/>
<path d="M944.1,508.5 L944.1,503.9" stroke="#ff0000"/>
<path d="M183.5,508.5 L183.5,491.9 L186.7,482.5 L186.7,508.5" stroke="#00ff00"/>
<path d="M227.3,508.5 L227.3,486.7" stroke="#00ff00"/>
<path d="M275.4,508.5 L275.4,492.9" stroke="#00ff00"/>
<path d="M302.3,508.5 L302.3,481.0" stroke="#00ff00"/>
<path d="M422.5,508.5 L422.5,462.1" stroke="#00ff00"/>
<path d="M429.6,508.5 L429.6,479.4" stroke="#00ff00"/>
<path d="M531.2,508.5 L531.2,486.2" stroke="#00ff00"/>
<path d="M582.3,508.5 L582.3,473.8" stroke="#00ff00"/>
<path d="M945.2,508.5 L945.2,488.0" stroke="#00ff00"/>
<path d="M962.4,508.5 L962.4,488.0" stroke="#00ff00"/>
<path d="M992.6,508.5 L992.6,475.2" stroke="#00ff00"/>
<path d="M1006.4,508.5 L1006.4,495.9" stroke="#00ff00"/>
<path d="M1030.4,508.5 L1030.4,490.1 L1033.6,494.4 L1033.6,508.5" stroke="#00ff00"/>
<path d="M1050.4,508.5 L1050.4,492.2" stroke="#00ff00"/>
<path d="M1074.4,508.5 L1074.4,476.3" stroke="#00ff00"/>
</g>
<line x1="91" y1="509.5" x2="95" y2="509.5" stroke="#333" stroke-width="1"/>
<line x1="91" y1="507.5" x2="95" y2="507.5" stroke="#333" stroke-width="1"/>
<line x1="91" y1="506.5" x2="95" y2="506.5" stroke="#333" stroke-width="1"/>
<line x1="91" y1="504.5" x2="95" y2="504.5" stroke="#333" stroke-width="1"/>
<line x1="91" y1="503.5" x2="95" y2="503.5" stroke="#333" stroke-width="1"/>
<line x1="87" y1="502.5" x2="95" y2="502.5" stroke="#333" stroke-width="1"/>
<line x1="91" y1="496.5" x2="95" y2="496.5" stroke="#333" stroke-width="1"/>
<line x1="91" y1="492.5" x2="95" y2="492.5" stroke="#333" stroke-width="1"/>
<line x1="91" y1="489.5" x2="95" y2="489.5" stroke="#333" stroke-width="1"/>
<line x1="91" y1="487.5" x2="95" y2="487.5" stroke="#333" stroke-width="1"/>
<line x1="91" y1="485.5" x2="95" y2="485.5" stroke="#333" stroke-width="1"/>
<line x1="91" y1="484.5" x2="95" y2="484.5" stroke="#333" stroke-width="1"/>
<line x1="91" y1="482.5" x2="95" y2="482.5" stroke="#333" stroke-width="1"/>
<line x1="91" y1="481.5" x2="95" y2="481.5" stroke="#333" stroke-width="1"/>
<line x1="87" y1="480.5" x2="95" y2="480.5" stroke="#333" stroke-width="1"/>
<line x1="91" y1="474.5" x2="95" y2="474.5" stroke="#333" stroke-width="1"/>
<line x1="91" y1="470.5" x2="95" y2="470.5" stroke="#333" stroke-width="1"/>
<line x1="91" y1="467.5" x2="95" y2="467.5" stroke="#333" stroke-width="1"/>
<line x1="91" y1="465.5" x2="95" y2="465.5" stroke="#333" stroke-width="1"/>
<line x1="91" y1="463.5" x2="95" y2="463.5" stroke="#333" stroke-width="1"/>
<line x1="91" y1="462.5" x2="95" y2="462.5" stroke="#333" stroke-width="1"/>
<line x1="91" y1="460.5" x2="95" y2="460.5" stroke="#333" stroke-width="1"/>
<line x1="91" y1="459.5" x2="95" y2="459.5" stroke="#333" stroke-width="1"/>
<line x1="87" y1="458.5" x2="95" y2="458.5" stroke="#333" stroke-width="1"/>
<line x1="91" y1="452.5" x2="95" y2="452.5" stroke="#333" stroke-width="1"/>
<line x1="91" y1="448.5" x2="95" y2="448.5" stroke="#333" stroke-width="1"/>
<line x1="91" y1="445.5" x2="95" y2="445.5" stroke="#333" stroke-width="1"/>
<line x1="91" y1="443.5" x2="95" y2="443.5" stroke="#333" stroke-width="1"/>
<line x1="91" y1="441.5" x2="95" y2="441.5" stroke="#333" stroke-width="1"/>
<line x1="91" y1="440.5" x2="95" y2="440.5" stroke="#333" stroke-width="1"/>
<line x1="91" y1="438.5" x2="95" y2="438.5" stroke="#333" stroke-width="1"/>
<line x1="91" y1="437.5" x2="95" y2="437.5" stroke="#333" stroke-width="1"/>
<line x1="87" y1="436.5" x2="95" y2="436.5" stroke="#333" stroke-width="1"/>
<line x1="91" y1="430.5" x2="95" y2="430.5" stroke="#333" stroke-width="1"/>
<line x1="91" y1="426.5" x2="95" y2="426.5" stroke="#333" stroke-width="1"/>
<line x1="91" y1="423.5" x2="95" y2="423.5" stroke="#333" stroke-width="1"/>
<line x1="91" y1="421.5" x2="95" y2="421.5" stroke="#333" stroke-width="1"/>
<text x="52.9" y="443.6" font-size="12" textLength="13.2" lengthAdjust="spacing" fill="#484848">10</text>
<text x="67.7" y="437.6" font-size="12" textLength="13.8" lengthAdjust="spacing" fill="#484848">−9</text>
<text x="46.6" y="465.6" font-size="12" textLength="13.2" lengthAdjust="spacing" fill="#484848">10</text>
<text x="61.4" y="459.6" font-size="12" textLength="20.1" lengthAdjust="spacing" fill="#484848">−10</text>
<text x="46.6" y="487.6" font-size="12" textLength="13.2" lengthAdjust="spacing" fill="#484848">10</text>
<text x="61.4" y="481.6" font-size="12" textLength="20.1" lengthAdjust="spacing" fill="#484848">−11</text>
<text x="46.6" y="509.6" font-size="12" textLength="13.2" lengthAdjust="spacing" fill="#484848">10</text>
<text x="61.4" y="503.6" font-size="12" textLength="20.1" lengthAdjust="spacing" fill="#484848">−12</text>
<text x="34.0" y="465.0" font-size="12" text-anchor="middle" textLength="69.0" lengthAdjust="spacing" transform="rotate(-90 34 465)" fill="#484848">P dyn/cm^2</text>
<rect x="95" y="513" width="986" height="179" fill="#000"/>
<defs>
<linearGradient id="p4lo" gradientUnits="userSpaceOnUse" x1="0" y1="590" x2="0" y2="690">
<stop offset="0" stop-color="#0a80e0"/><stop offset="0.3" stop-color="#10a8b0"/><stop offset="0.55" stop-color="#30c878"/>
<stop offset="0.72" stop-color="#70dc40"/><stop offset="0.86" stop-color="#c8e810"/><stop offset="0.94" stop-color="#e8e000"/><stop offset="1" stop-color="#f0c000"/>
</linearGradient>
<linearGradient id="p4a" gradientUnits="userSpaceOnUse" x1="0" y1="560" x2="0" y2="630"><stop offset="0" stop-color="#1a50f0"/><stop offset="0.45" stop-color="#0a7ce8"/><stop offset="0.75" stop-color="#10a4cc"/><stop offset="1" stop-color="#10b0a8"/></linearGradient>
<linearGradient id="p4o" gradientUnits="userSpaceOnUse" x1="0" y1="664" x2="0" y2="690">
<stop offset="0" stop-color="#a0e020"/><stop offset="0.5" stop-color="#e0e000"/><stop offset="0.8" stop-color="#f0c800"/><stop offset="1" stop-color="#f0a800"/>
</linearGradient></defs>
<g shape-rendering="crispEdges">
<path fill="#1a2ee0" d="M96 551h1v34h-1zM101 530h2v22h-2zM104 555h1v14h-1zM109 555h2v14h-2zM112 555h1v14h-1zM113 551h3v5h-3zM116 573h2v12h-2zM120 530h2v26h-2zM126 527h1v29h-1zM128 555h2v30h-2zM130 530h1v25h-1zM134 543h1v9h-1zM133 580h1v5h-1zM146 530h2v22h-2zM149 539h1v17h-1zM152 539h1v13h-1zM152 580h1v5h-1zM154 555h2v14h-2zM157 534h2v18h-2zM160 539h1v17h-1zM161 555h2v14h-2zM164 551h1v5h-1zM164 580h1v5h-1zM170 530h1v26h-1zM174 551h1v5h-1zM183 551h2v5h-2zM196 530h1v22h-1zM196 568h1v13h-1zM201 530h3v39h-3zM204 580h1v5h-1zM209 530h2v26h-2zM211 555h1v14h-1zM213 551h2v5h-2zM215 555h2v30h-2zM219 530h1v22h-1zM219 555h2v26h-2zM224 534h2v18h-2zM230 530h2v39h-2zM237 551h2v5h-2zM245 555h1v26h-1zM247 555h2v26h-2zM253 551h1v5h-1zM257 530h1v26h-1zM264 526h3v26h-3zM267 555h1v26h-1zM268 580h1v5h-1zM282 539h2v17h-2zM284 551h2v5h-2zM287 535h2v34h-2zM290 555h1v26h-1zM293 527h1v25h-1zM302 580h2v5h-2zM309 568h1v17h-1zM310 530h3v22h-3zM312 551h3v30h-3zM315 530h1v22h-1zM320 551h1v5h-1zM323 551h1v5h-1zM325 526h3v30h-3zM328 580h2v5h-2zM332 527h2v29h-2zM339 539h1v17h-1zM338 555h1v14h-1zM342 555h1v14h-1zM346 551h1v5h-1zM343 580h2v5h-2zM350 580h1v5h-1zM351 555h2v26h-2zM356 555h1v26h-1zM366 580h2v5h-2zM372 555h1v14h-1zM375 551h1v5h-1zM375 580h1v5h-1zM377 568h2v38h-2zM379 551h1v5h-1zM382 534h1v18h-1zM383 580h7v5h-7zM384 551h2v5h-2zM386 526h1v26h-1zM390 555h1v14h-1zM392 555h2v14h-2zM397 555h1v14h-1zM401 568h1v17h-1zM403 551h2v5h-2zM405 555h1v14h-1zM409 530h1v26h-1zM410 584h2v22h-2zM418 580h2v5h-2zM421 534h2v18h-2zM423 530h2v26h-2zM427 540h1v41h-1zM432 551h2v5h-2zM436 584h2v22h-2zM438 527h1v25h-1zM442 530h1v26h-1zM443 580h1v5h-1zM444 555h2v14h-2zM446 530h1v22h-1zM448 551h1v5h-1zM449 580h1v5h-1zM458 534h2v18h-2zM460 555h1v30h-1zM462 551h2v18h-2zM465 530h1v22h-1zM468 551h1v5h-1zM469 555h1v26h-1zM472 555h1v26h-1zM476 580h3v5h-3zM477 539h2v17h-2zM484 580h1v5h-1zM485 539h2v13h-2zM488 539h2v13h-2zM491 580h1v5h-1zM492 555h2v26h-2zM494 551h1v5h-1zM496 580h3v5h-3zM498 568h1v13h-1zM509 530h4v22h-4zM510 551h1v5h-1zM511 580h1v5h-1zM516 530h1v26h-1zM520 551h2v5h-2zM522 555h2v26h-2zM528 527h1v25h-1zM532 523h1v29h-1zM536 555h3v14h-3zM540 530h3v26h-3zM543 555h1v14h-1zM551 551h2v5h-2zM551 580h2v5h-2zM557 527h1v29h-1zM558 580h1v5h-1zM565 534h4v22h-4zM576 568h1v13h-1zM581 555h2v14h-2zM585 555h2v14h-2zM589 530h2v26h-2zM591 555h1v51h-1zM594 530h2v22h-2zM596 555h2v14h-2zM603 551h1v5h-1zM606 527h1v25h-1zM611 580h2v5h-2zM615 580h2v5h-2zM618 580h3v5h-3zM620 555h2v26h-2zM621 530h1v26h-1zM625 539h1v17h-1zM629 551h1v5h-1zM632 534h1v22h-1zM635 568h1v17h-1zM636 526h3v26h-3zM644 580h2v5h-2zM645 530h1v22h-1zM648 523h2v29h-2zM650 555h1v14h-1zM652 530h3v26h-3zM656 551h5v5h-5zM658 568h1v13h-1zM661 568h1v17h-1zM672 555h1v14h-1zM676 527h2v25h-2zM677 555h1v26h-1zM679 551h2v5h-2zM680 534h1v18h-1zM684 580h1v5h-1zM685 551h2v5h-2zM692 551h1v5h-1zM695 555h1v30h-1zM698 530h1v22h-1zM702 555h1v14h-1zM710 555h1v30h-1zM713 555h2v26h-2zM717 580h1v5h-1zM721 551h1v5h-1zM726 551h2v5h-2zM728 555h2v26h-2zM741 534h2v35h-2zM743 555h1v30h-1zM749 530h2v22h-2zM752 555h1v14h-1zM753 551h2v5h-2zM758 530h7v26h-7zM763 555h2v26h-2zM767 534h2v18h-2zM768 555h1v14h-1zM773 534h2v18h-2zM776 523h1v29h-1zM777 534h3v22h-3zM782 551h2v5h-2zM789 530h1v22h-1zM790 555h2v14h-2zM792 580h1v5h-1zM793 551h2v5h-2zM796 534h2v18h-2zM801 555h2v26h-2zM803 551h1v5h-1zM806 580h2v5h-2zM810 551h2v5h-2zM813 530h2v22h-2zM815 568h2v13h-2zM817 551h1v5h-1zM822 555h1v26h-1zM826 539h1v30h-1zM827 568h2v13h-2zM833 555h1v30h-1zM837 551h1v5h-1zM840 568h4v17h-4zM841 540h1v29h-1zM849 555h2v14h-2zM852 568h1v13h-1zM860 580h2v5h-2zM863 551h1v18h-1zM875 523h2v33h-2zM878 523h1v29h-1zM882 530h2v26h-2zM889 551h3v18h-3zM893 580h1v5h-1zM894 551h2v5h-2zM899 551h1v18h-1zM902 551h2v5h-2zM903 580h1v5h-1zM922 555h1v14h-1zM925 551h2v18h-2zM930 526h1v26h-1zM930 580h1v5h-1zM933 568h3v17h-3zM937 530h1v22h-1zM940 530h2v39h-2zM944 530h2v22h-2zM944 568h1v13h-1zM952 527h3v54h-3zM956 580h2v5h-2zM960 555h1v14h-1zM962 580h1v5h-1zM964 523h2v29h-2zM967 568h1v13h-1zM968 530h2v39h-2zM977 551h4v5h-4zM987 555h2v14h-2zM989 551h1v5h-1zM990 568h2v13h-2zM1000 568h3v17h-3zM1007 530h1v22h-1zM1016 551h2v5h-2zM1019 555h1v14h-1zM1022 539h1v13h-1zM1037 568h1v17h-1zM1041 534h1v18h-1zM1042 555h2v26h-2zM1045 551h1v5h-1zM1049 527h1v29h-1zM1050 580h2v5h-2zM1055 551h1v18h-1zM1060 530h1v39h-1zM1063 551h1v5h-1zM1066 535h1v17h-1zM1070 568h1v12h-1zM1072 551h2v5h-2z"/>
<path fill="#1420b8" d="M108 527h1v4h-1zM133 527h1v4h-1zM134 514h1v8h-1zM161 526h2v5h-2zM172 527h2v4h-2zM190 527h1v4h-1zM208 523h3v8h-3zM235 514h2v13h-2zM242 514h1v5h-1zM250 527h2v4h-2zM302 514h2v8h-2zM319 527h1v4h-1zM321 514h2v8h-2zM343 527h3v4h-3zM371 523h1v8h-1zM388 527h2v4h-2zM394 527h1v4h-1zM397 514h1v8h-1zM399 523h2v8h-2zM410 527h2v4h-2zM414 527h2v4h-2zM427 514h1v8h-1zM449 527h1v4h-1zM468 523h1v8h-1zM479 527h1v4h-1zM559 526h2v5h-2zM617 527h1v4h-1zM655 527h1v4h-1zM693 523h2v8h-2zM715 527h2v4h-2zM733 527h1v4h-1zM737 527h2v4h-2zM755 527h1v4h-1zM796 527h1v4h-1zM819 526h2v5h-2zM841 514h1v5h-1zM879 514h2v8h-2zM916 523h2v8h-2zM922 526h3v5h-3zM959 527h1v4h-1zM974 527h1v4h-1zM978 514h1v8h-1zM1009 527h2v4h-2zM1018 514h1v8h-1zM1023 523h1v8h-1zM1039 514h2v8h-2zM1054 527h1v4h-1zM1058 527h1v4h-1zM1064 519h1v12h-1zM1071 527h1v4h-1z"/>
<path fill="url(#p4a)" d="M113 580h2v26h-2zM115 605h1v14h-1zM119 584h1v22h-1zM134 605h1v14h-1zM163 605h1v14h-1zM168 580h2v5h-2zM180 618h2v6h-2zM200 580h1v26h-1zM214 580h2v26h-2zM232 584h2v22h-2zM239 584h2v22h-2zM260 580h3v26h-3zM271 584h1v35h-1zM276 580h2v5h-2zM327 580h2v26h-2zM256 664h1v8h-1zM379 605h4v14h-4zM384 584h2v22h-2zM388 584h2v22h-2zM434 580h1v26h-1zM442 605h1v14h-1zM451 584h2v35h-2zM469 605h1v14h-1zM476 584h1v22h-1zM505 605h1v14h-1zM544 584h2v22h-2zM553 584h1v22h-1zM562 584h1v22h-1zM565 584h1v22h-1zM574 584h1v22h-1zM477 664h2v8h-2zM575 584h1v22h-1zM580 584h1v22h-1zM584 580h3v26h-3zM588 580h1v26h-1zM594 568h1v38h-1zM603 584h1v22h-1zM637 584h2v22h-2zM641 584h2v22h-2zM667 568h2v38h-2zM719 584h2v35h-2zM726 584h2v22h-2zM733 605h1v14h-1zM746 584h1v35h-1zM763 580h2v26h-2zM829 580h1v26h-1zM842 580h2v26h-2zM859 584h1v35h-1zM863 605h3v14h-3zM866 568h2v38h-2zM885 584h1v22h-1zM908 584h2v22h-2zM926 584h1v22h-1zM970 584h1v22h-1zM983 580h2v26h-2zM986 605h1v14h-1zM997 584h1v35h-1zM1024 647h2v18h-2zM856 664h2v12h-2zM1061 579h2v6h-2z"/>
<path fill="url(#p4lo)" d="M180 624h2v7h-2zM197 618h1v13h-1zM212 618h1v13h-1zM216 630h1v18h-1zM241 630h1v18h-1zM260 606h3v13h-3zM330 618h1v13h-1zM104 630h1v18h-1zM105 664h2v12h-2zM105 676h2v14h-2zM115 676h1v14h-1zM118 676h1v14h-1zM123 676h1v14h-1zM138 676h1v14h-1zM142 676h2v14h-2zM144 630h1v18h-1zM163 664h1v26h-1zM178 647h2v17h-2zM178 664h2v26h-2zM182 676h1v14h-1zM185 676h1v14h-1zM189 676h1v14h-1zM197 664h1v26h-1zM198 647h2v18h-2zM201 647h1v29h-1zM204 664h1v12h-1zM212 676h1v14h-1zM223 647h1v29h-1zM231 676h1v14h-1zM242 664h1v26h-1zM243 647h2v18h-2zM249 647h1v43h-1zM256 672h1v18h-1zM263 676h1v14h-1zM272 664h4v12h-4zM280 647h2v18h-2zM283 647h3v30h-3zM290 676h1v14h-1zM292 647h1v18h-1zM293 664h2v26h-2zM295 676h4v14h-4zM302 676h3v14h-3zM315 676h2v14h-2zM320 630h1v18h-1zM320 676h1v14h-1zM324 676h1v14h-1zM334 664h1v26h-1zM368 605h1v14h-1zM373 605h2v14h-2zM414 605h2v26h-2zM432 605h2v14h-2zM461 605h1v26h-1zM509 618h1v30h-1zM513 630h1v18h-1zM569 618h1v30h-1zM572 647h1v18h-1zM349 676h1v14h-1zM356 676h1v14h-1zM366 664h2v12h-2zM408 676h2v14h-2zM414 676h2v14h-2zM428 676h1v14h-1zM431 676h1v14h-1zM434 676h1v14h-1zM439 676h1v14h-1zM444 664h2v13h-2zM447 664h2v26h-2zM455 676h2v14h-2zM460 676h2v14h-2zM464 664h1v12h-1zM465 676h2v14h-2zM468 676h1v14h-1zM477 672h2v18h-2zM487 676h3v14h-3zM494 676h1v14h-1zM495 664h1v12h-1zM499 664h2v26h-2zM505 676h1v14h-1zM521 664h1v26h-1zM524 676h1v14h-1zM536 676h3v14h-3zM544 676h2v14h-2zM562 676h3v6h-3zM566 664h2v12h-2zM569 676h1v14h-1zM572 676h3v14h-3zM598 618h1v13h-1zM621 605h1v26h-1zM637 606h2v25h-2zM666 618h1v30h-1zM667 606h2v13h-2zM691 618h1v13h-1zM744 618h1v30h-1zM778 630h2v34h-2zM779 664h3v12h-3zM788 630h1v18h-1zM801 630h2v18h-2zM806 630h1v18h-1zM576 647h1v18h-1zM575 676h2v14h-2zM581 676h2v14h-2zM584 664h1v26h-1zM602 676h1v14h-1zM604 676h2v7h-2zM604 683h2v7h-2zM610 664h4v12h-4zM621 676h1v14h-1zM626 664h2v26h-2zM629 676h1v14h-1zM632 676h1v14h-1zM635 676h1v14h-1zM639 664h2v26h-2zM658 676h1v14h-1zM661 676h1v14h-1zM663 664h3v12h-3zM663 676h3v14h-3zM669 676h3v14h-3zM677 664h1v26h-1zM685 676h2v14h-2zM688 676h1v14h-1zM695 676h1v14h-1zM698 676h1v14h-1zM703 676h1v14h-1zM706 676h1v14h-1zM711 664h4v12h-4zM726 676h2v14h-2zM734 676h2v14h-2zM740 676h1v14h-1zM743 676h1v14h-1zM748 676h1v14h-1zM758 676h1v14h-1zM762 676h1v14h-1zM766 676h4v14h-4zM773 676h1v14h-1zM788 676h1v14h-1zM806 676h4v14h-4zM813 676h2v14h-2zM863 618h1v13h-1zM904 618h1v13h-1zM911 618h1v13h-1zM934 630h3v18h-3zM1022 618h1v13h-1zM1039 605h2v14h-2zM815 647h2v29h-2zM889 647h1v29h-1zM893 630h1v18h-1zM1004 647h1v18h-1zM1008 647h1v18h-1zM1034 647h1v18h-1zM1052 630h3v35h-3zM830 676h2v14h-2zM833 676h1v14h-1zM837 676h1v14h-1zM840 676h4v14h-4zM849 676h3v14h-3zM851 664h1v12h-1zM862 676h1v14h-1zM873 664h2v26h-2zM878 664h1v26h-1zM884 676h1v14h-1zM892 664h1v26h-1zM899 676h1v14h-1zM903 676h1v14h-1zM907 676h1v14h-1zM915 664h1v26h-1zM938 676h2v14h-2zM951 676h1v14h-1zM960 664h1v26h-1zM970 676h1v14h-1zM975 664h2v26h-2zM983 664h2v12h-2zM996 676h1v14h-1zM1000 676h1v14h-1zM1013 676h2v14h-2zM1023 676h3v14h-3zM1037 676h1v14h-1zM1039 676h3v14h-3zM1045 676h2v14h-2zM1048 664h2v26h-2zM1079 605h1v14h-1zM1053 630h2v35h-2zM1075 647h1v18h-1zM1050 676h2v14h-2zM1053 655h2v9h-2zM1057 676h2v14h-2zM1065 676h2v14h-2zM1075 650h1v14h-1zM1078 676h1v14h-1z"/>
<path fill="url(#p4o)" d="M200 676h5v14h-5zM223 676h3v14h-3zM272 676h4v14h-4zM366 676h3v14h-3zM473 676h2v14h-2zM562 682h3v8h-3zM610 676h4v14h-4zM711 676h3v14h-3zM779 676h5v14h-5zM801 676h4v14h-4zM825 676h4v14h-4zM856 676h2v14h-2zM896 664h3v26h-3zM920 664h3v26h-3zM942 664h6v26h-6zM981 676h9v14h-9zM1007 664h4v26h-4zM1029 664h5v26h-5zM1052 665h2v25h-2zM1048 664h2v26h-2zM1052 664h3v26h-3zM1071 664h4v26h-4zM1075 664h3v26h-3zM1079 664h1v26h-1z"/>
</g>
<rect x="95.5" y="513.5" width="985" height="178" fill="none" stroke="#333"/>
<line x1="91" y1="687.5" x2="95" y2="687.5" stroke="#333" stroke-width="1"/>
<line x1="91" y1="680.5" x2="95" y2="680.5" stroke="#333" stroke-width="1"/>
<line x1="91" y1="675.5" x2="95" y2="675.5" stroke="#333" stroke-width="1"/>
<line x1="91" y1="671.5" x2="95" y2="671.5" stroke="#333" stroke-width="1"/>
<line x1="91" y1="667.5" x2="95" y2="667.5" stroke="#333" stroke-width="1"/>
<line x1="91" y1="664.5" x2="95" y2="664.5" stroke="#333" stroke-width="1"/>
<line x1="91" y1="662.5" x2="95" y2="662.5" stroke="#333" stroke-width="1"/>
<line x1="87" y1="659.5" x2="95" y2="659.5" stroke="#333" stroke-width="1"/>
<line x1="91" y1="643.5" x2="95" y2="643.5" stroke="#333" stroke-width="1"/>
<line x1="91" y1="634.5" x2="95" y2="634.5" stroke="#333" stroke-width="1"/>
<line x1="91" y1="628.5" x2="95" y2="628.5" stroke="#333" stroke-width="1"/>
<line x1="91" y1="623.5" x2="95" y2="623.5" stroke="#333" stroke-width="1"/>
<line x1="91" y1="618.5" x2="95" y2="618.5" stroke="#333" stroke-width="1"/>
<line x1="91" y1="615.5" x2="95" y2="615.5" stroke="#333" stroke-width="1"/>
<line x1="91" y1="612.5" x2="95" y2="612.5" stroke="#333" stroke-width="1"/>
<line x1="91" y1="609.5" x2="95" y2="609.5" stroke="#333" stroke-width="1"/>
<line x1="87" y1="607.5" x2="95" y2="607.5" stroke="#333" stroke-width="1"/>
<line x1="91" y1="591.5" x2="95" y2="591.5" stroke="#333" stroke-width="1"/>
<line x1="91" y1="582.5" x2="95" y2="582.5" stroke="#333" stroke-width="1"/>
<line x1="91" y1="575.5" x2="95" y2="575.5" stroke="#333" stroke-width="1"/>
<line x1="91" y1="570.5" x2="95" y2="570.5" stroke="#333" stroke-width="1"/>
<line x1="91" y1="566.5" x2="95" y2="566.5" stroke="#333" stroke-width="1"/>
<line x1="91" y1="562.5" x2="95" y2="562.5" stroke="#333" stroke-width="1"/>
<line x1="91" y1="559.5" x2="95" y2="559.5" stroke="#333" stroke-width="1"/>
<line x1="91" y1="557.5" x2="95" y2="557.5" stroke="#333" stroke-width="1"/>
<line x1="87" y1="554.5" x2="95" y2="554.5" stroke="#333" stroke-width="1"/>
<line x1="91" y1="538.5" x2="95" y2="538.5" stroke="#333" stroke-width="1"/>
<line x1="91" y1="529.5" x2="95" y2="529.5" stroke="#333" stroke-width="1"/>
<line x1="91" y1="522.5" x2="95" y2="522.5" stroke="#333" stroke-width="1"/>
<line x1="91" y1="517.5" x2="95" y2="517.5" stroke="#333" stroke-width="1"/>
<line x1="91" y1="513.5" x2="95" y2="513.5" stroke="#333" stroke-width="1"/>
<text x="60.2" y="561.4" font-size="12" textLength="13.2" lengthAdjust="spacing" fill="#484848">10</text>
<text x="75.0" y="555.4" font-size="12" textLength="5.3" lengthAdjust="spacing" fill="#484848">4</text>
<text x="60.2" y="614.0" font-size="12" textLength="13.2" lengthAdjust="spacing" fill="#484848">10</text>
<text x="75.0" y="608.0" font-size="12" textLength="5.3" lengthAdjust="spacing" fill="#484848">3</text>
<text x="60.2" y="666.6" font-size="12" textLength="13.2" lengthAdjust="spacing" fill="#484848">10</text>
<text x="75.0" y="660.6" font-size="12" textLength="5.3" lengthAdjust="spacing" fill="#484848">2</text>
<text x="50.0" y="602.0" font-size="12" text-anchor="middle" textLength="72.0" lengthAdjust="spacing" transform="rotate(-90 50 602)" fill="#484848">Energy (keV)</text>
<text x="9.5" y="538.0" font-size="12" textLength="65.0" lengthAdjust="spacing" fill="#484848">LEMMS Ions</text>
<rect x="95.5" y="695.5" width="985" height="15" fill="#00ff00" stroke="#222"/>
<rect x="95" y="695" width="2" height="16" fill="#111"/>
<text x="78.5" y="707.5" font-size="12" text-anchor="end" textLength="49.0" lengthAdjust="spacing" fill="#484848">Sunlight?</text>
<line x1="136.5" y1="711" x2="136.5" y2="715" stroke="#333" stroke-width="1"/>
<line x1="177.5" y1="711" x2="177.5" y2="715" stroke="#333" stroke-width="1"/>
<line x1="218.5" y1="711" x2="218.5" y2="719" stroke="#333" stroke-width="1"/>
<line x1="259.5" y1="711" x2="259.5" y2="715" stroke="#333" stroke-width="1"/>
<line x1="300.5" y1="711" x2="300.5" y2="715" stroke="#333" stroke-width="1"/>
<line x1="341.5" y1="711" x2="341.5" y2="719" stroke="#333" stroke-width="1"/>
<line x1="382.5" y1="711" x2="382.5" y2="715" stroke="#333" stroke-width="1"/>
<line x1="423.5" y1="711" x2="423.5" y2="715" stroke="#333" stroke-width="1"/>
<line x1="464.5" y1="711" x2="464.5" y2="719" stroke="#333" stroke-width="1"/>
<line x1="505.5" y1="711" x2="505.5" y2="715" stroke="#333" stroke-width="1"/>
<line x1="546.5" y1="711" x2="546.5" y2="715" stroke="#333" stroke-width="1"/>
<line x1="587.5" y1="711" x2="587.5" y2="719" stroke="#333" stroke-width="1"/>
<line x1="628.5" y1="711" x2="628.5" y2="715" stroke="#333" stroke-width="1"/>
<line x1="669.5" y1="711" x2="669.5" y2="715" stroke="#333" stroke-width="1"/>
<line x1="710.5" y1="711" x2="710.5" y2="719" stroke="#333" stroke-width="1"/>
<line x1="751.5" y1="711" x2="751.5" y2="715" stroke="#333" stroke-width="1"/>
<line x1="792.5" y1="711" x2="792.5" y2="715" stroke="#333" stroke-width="1"/>
<line x1="833.5" y1="711" x2="833.5" y2="719" stroke="#333" stroke-width="1"/>
<line x1="874.5" y1="711" x2="874.5" y2="715" stroke="#333" stroke-width="1"/>
<line x1="915.5" y1="711" x2="915.5" y2="715" stroke="#333" stroke-width="1"/>
<line x1="956.5" y1="711" x2="956.5" y2="719" stroke="#333" stroke-width="1"/>
<line x1="997.5" y1="711" x2="997.5" y2="715" stroke="#333" stroke-width="1"/>
<line x1="1038.5" y1="711" x2="1038.5" y2="715" stroke="#333" stroke-width="1"/>
<line x1="1080.5" y1="711" x2="1080.5" y2="719" stroke="#333" stroke-width="1"/>
<text x="218.2" y="733.6" font-size="12" text-anchor="middle" textLength="35.0" lengthAdjust="spacing" fill="#484848">03:00</text>
<text x="218.2" y="749.3" font-size="12" text-anchor="middle" textLength="35.0" lengthAdjust="spacing" fill="#484848">15.32</text>
<text x="218.2" y="764.3" font-size="12" text-anchor="middle" textLength="35.0" lengthAdjust="spacing" fill="#484848">39.44</text>
<text x="218.2" y="779.0" font-size="12" text-anchor="middle" textLength="35.0" lengthAdjust="spacing" fill="#484848">77.27</text>
<text x="341.2" y="733.6" font-size="12" text-anchor="middle" textLength="35.0" lengthAdjust="spacing" fill="#484848">06:00</text>
<text x="341.2" y="749.3" font-size="12" text-anchor="middle" textLength="35.0" lengthAdjust="spacing" fill="#484848">15.36</text>
<text x="341.2" y="764.3" font-size="12" text-anchor="middle" textLength="35.0" lengthAdjust="spacing" fill="#484848">39.70</text>
<text x="341.2" y="779.0" font-size="12" text-anchor="middle" textLength="35.0" lengthAdjust="spacing" fill="#484848">78.45</text>
<text x="464.2" y="733.6" font-size="12" text-anchor="middle" textLength="35.0" lengthAdjust="spacing" fill="#484848">09:00</text>
<text x="464.2" y="749.3" font-size="12" text-anchor="middle" textLength="35.0" lengthAdjust="spacing" fill="#484848">15.41</text>
<text x="464.2" y="764.3" font-size="12" text-anchor="middle" textLength="35.0" lengthAdjust="spacing" fill="#484848">39.95</text>
<text x="464.2" y="779.0" font-size="12" text-anchor="middle" textLength="35.0" lengthAdjust="spacing" fill="#484848">79.62</text>
<text x="587.2" y="733.6" font-size="12" text-anchor="middle" textLength="35.0" lengthAdjust="spacing" fill="#484848">12:00</text>
<text x="587.2" y="749.3" font-size="12" text-anchor="middle" textLength="35.0" lengthAdjust="spacing" fill="#484848">15.45</text>
<text x="587.2" y="764.3" font-size="12" text-anchor="middle" textLength="35.0" lengthAdjust="spacing" fill="#484848">40.20</text>
<text x="587.2" y="779.0" font-size="12" text-anchor="middle" textLength="35.0" lengthAdjust="spacing" fill="#484848">80.77</text>
<text x="710.2" y="733.6" font-size="12" text-anchor="middle" textLength="35.0" lengthAdjust="spacing" fill="#484848">15:00</text>
<text x="710.2" y="749.3" font-size="12" text-anchor="middle" textLength="35.0" lengthAdjust="spacing" fill="#484848">15.49</text>
<text x="710.2" y="764.3" font-size="12" text-anchor="middle" textLength="35.0" lengthAdjust="spacing" fill="#484848">40.43</text>
<text x="710.2" y="779.0" font-size="12" text-anchor="middle" textLength="35.0" lengthAdjust="spacing" fill="#484848">81.90</text>
<text x="833.2" y="733.6" font-size="12" text-anchor="middle" textLength="35.0" lengthAdjust="spacing" fill="#484848">18:00</text>
<text x="833.2" y="749.3" font-size="12" text-anchor="middle" textLength="35.0" lengthAdjust="spacing" fill="#484848">15.53</text>
<text x="833.2" y="764.3" font-size="12" text-anchor="middle" textLength="35.0" lengthAdjust="spacing" fill="#484848">40.65</text>
<text x="833.2" y="779.0" font-size="12" text-anchor="middle" textLength="35.0" lengthAdjust="spacing" fill="#484848">83.02</text>
<text x="956.2" y="733.6" font-size="12" text-anchor="middle" textLength="35.0" lengthAdjust="spacing" fill="#484848">21:00</text>
<text x="956.2" y="749.3" font-size="12" text-anchor="middle" textLength="35.0" lengthAdjust="spacing" fill="#484848">15.58</text>
<text x="956.2" y="764.3" font-size="12" text-anchor="middle" textLength="35.0" lengthAdjust="spacing" fill="#484848">40.87</text>
<text x="956.2" y="779.0" font-size="12" text-anchor="middle" textLength="35.0" lengthAdjust="spacing" fill="#484848">84.11</text>
<text x="1080.2" y="733.6" font-size="12" text-anchor="middle" textLength="35.0" lengthAdjust="spacing" fill="#484848">00:00</text>
<text x="1080.2" y="749.3" font-size="12" text-anchor="middle" textLength="35.0" lengthAdjust="spacing" fill="#484848">15.62</text>
<text x="1080.2" y="764.3" font-size="12" text-anchor="middle" textLength="35.0" lengthAdjust="spacing" fill="#484848">41.07</text>
<text x="1080.2" y="779.0" font-size="12" text-anchor="middle" textLength="35.0" lengthAdjust="spacing" fill="#484848">85.19</text>
<text x="59.5" y="749.2" font-size="12" text-anchor="end" textLength="43.0" lengthAdjust="spacing" fill="#484848">LT (hrs)</text>
<text x="59.5" y="763.5" font-size="12" text-anchor="end" textLength="14.5" lengthAdjust="spacing" fill="#484848">Rs</text>
<text x="59.7" y="778.3" font-size="12" text-anchor="end" textLength="47.0" lengthAdjust="spacing" fill="#484848">Dipole L</text>
<defs><linearGradient id="cb" x1="0" y1="0" x2="0" y2="1"><stop offset="0.0" stop-color="#cc6070"/><stop offset="0.03" stop-color="#e03a40"/><stop offset="0.08" stop-color="#f04810"/><stop offset="0.13" stop-color="#f86000"/><stop offset="0.21" stop-color="#ff8000"/><stop offset="0.29" stop-color="#f0a000"/><stop offset="0.34" stop-color="#e0c000"/><stop offset="0.39" stop-color="#d8e000"/><stop offset="0.45" stop-color="#b0f010"/><stop offset="0.49" stop-color="#80e030"/><stop offset="0.55" stop-color="#40d050"/><stop offset="0.61" stop-color="#10b870"/><stop offset="0.68" stop-color="#10a0a0"/><stop offset="0.75" stop-color="#0a80d0"/><stop offset="0.79" stop-color="#0a70ff"/><stop offset="0.87" stop-color="#1020ff"/><stop offset="0.92" stop-color="#0808b0"/><stop offset="1.0" stop-color="#000050"/></linearGradient></defs>
<rect x="1092" y="30" width="12" height="190.5" fill="url(#cb)"/>
<line x1="1104.5" y1="29" x2="1104.5" y2="221.0" stroke="#333" stroke-width="1"/>
<line x1="1104" y1="30.5" x2="1113" y2="30.5" stroke="#333" stroke-width="1"/>
<line x1="1104" y1="87.5" x2="1113" y2="87.5" stroke="#333" stroke-width="1"/>
<line x1="1104" y1="144.5" x2="1113" y2="144.5" stroke="#333" stroke-width="1"/>
<line x1="1104" y1="201.5" x2="1113" y2="201.5" stroke="#333" stroke-width="1"/>
<line x1="1104" y1="70.5" x2="1109" y2="70.5" stroke="#333" stroke-width="1"/>
<line x1="1104" y1="59.5" x2="1109" y2="59.5" stroke="#333" stroke-width="1"/>
<line x1="1104" y1="52.5" x2="1109" y2="52.5" stroke="#333" stroke-width="1"/>
<line x1="1104" y1="47.5" x2="1109" y2="47.5" stroke="#333" stroke-width="1"/>
<line x1="1104" y1="42.5" x2="1109" y2="42.5" stroke="#333" stroke-width="1"/>
<line x1="1104" y1="38.5" x2="1109" y2="38.5" stroke="#333" stroke-width="1"/>
<line x1="1104" y1="35.5" x2="1109" y2="35.5" stroke="#333" stroke-width="1"/>
<line x1="1104" y1="32.5" x2="1109" y2="32.5" stroke="#333" stroke-width="1"/>
<line x1="1104" y1="127.5" x2="1109" y2="127.5" stroke="#333" stroke-width="1"/>
<line x1="1104" y1="117.5" x2="1109" y2="117.5" stroke="#333" stroke-width="1"/>
<line x1="1104" y1="110.5" x2="1109" y2="110.5" stroke="#333" stroke-width="1"/>
<line x1="1104" y1="104.5" x2="1109" y2="104.5" stroke="#333" stroke-width="1"/>
<line x1="1104" y1="100.5" x2="1109" y2="100.5" stroke="#333" stroke-width="1"/>
<line x1="1104" y1="96.5" x2="1109" y2="96.5" stroke="#333" stroke-width="1"/>
<line x1="1104" y1="92.5" x2="1109" y2="92.5" stroke="#333" stroke-width="1"/>
<line x1="1104" y1="89.5" x2="1109" y2="89.5" stroke="#333" stroke-width="1"/>
<line x1="1104" y1="184.5" x2="1109" y2="184.5" stroke="#333" stroke-width="1"/>
<line x1="1104" y1="174.5" x2="1109" y2="174.5" stroke="#333" stroke-width="1"/>
<line x1="1104" y1="167.5" x2="1109" y2="167.5" stroke="#333" stroke-width="1"/>
<line x1="1104" y1="161.5" x2="1109" y2="161.5" stroke="#333" stroke-width="1"/>
<line x1="1104" y1="157.5" x2="1109" y2="157.5" stroke="#333" stroke-width="1"/>
<line x1="1104" y1="153.5" x2="1109" y2="153.5" stroke="#333" stroke-width="1"/>
<line x1="1104" y1="150.5" x2="1109" y2="150.5" stroke="#333" stroke-width="1"/>
<line x1="1104" y1="147.5" x2="1109" y2="147.5" stroke="#333" stroke-width="1"/>
<line x1="1104" y1="219.5" x2="1109" y2="219.5" stroke="#333" stroke-width="1"/>
<line x1="1104" y1="214.5" x2="1109" y2="214.5" stroke="#333" stroke-width="1"/>
<line x1="1104" y1="210.5" x2="1109" y2="210.5" stroke="#333" stroke-width="1"/>
<line x1="1104" y1="207.5" x2="1109" y2="207.5" stroke="#333" stroke-width="1"/>
<line x1="1104" y1="204.5" x2="1109" y2="204.5" stroke="#333" stroke-width="1"/>
<text x="1117.5" y="36.5" font-size="12" textLength="13.2" lengthAdjust="spacing" fill="#484848">10</text>
<text x="1133.0" y="30.5" font-size="12" textLength="13.8" lengthAdjust="spacing" fill="#484848">−9</text>
<text x="1117.5" y="93.8" font-size="12" textLength="13.2" lengthAdjust="spacing" fill="#484848">10</text>
<text x="1133.0" y="87.8" font-size="12" textLength="20.1" lengthAdjust="spacing" fill="#484848">−10</text>
<text x="1117.5" y="151.2" font-size="12" textLength="13.2" lengthAdjust="spacing" fill="#484848">10</text>
<text x="1133.0" y="145.2" font-size="12" textLength="20.1" lengthAdjust="spacing" fill="#484848">−11</text>
<text x="1117.5" y="208.5" font-size="12" textLength="13.2" lengthAdjust="spacing" fill="#484848">10</text>
<text x="1133.0" y="202.5" font-size="12" textLength="20.1" lengthAdjust="spacing" fill="#484848">−12</text>
<text x="1165.0" y="125.2" font-size="12" text-anchor="middle" textLength="121.0" lengthAdjust="spacing" transform="rotate(90 1165 125.25)" fill="#484848">pressure dyne/cm^2</text>
<rect x="1092" y="226" width="12" height="190.5" fill="url(#cb)"/>
<line x1="1104.5" y1="225" x2="1104.5" y2="417.0" stroke="#333" stroke-width="1"/>
<line x1="1104" y1="225.5" x2="1113" y2="225.5" stroke="#333" stroke-width="1"/>
<line x1="1104" y1="283.5" x2="1113" y2="283.5" stroke="#333" stroke-width="1"/>
<line x1="1104" y1="340.5" x2="1113" y2="340.5" stroke="#333" stroke-width="1"/>
<line x1="1104" y1="398.5" x2="1113" y2="398.5" stroke="#333" stroke-width="1"/>
<line x1="1104" y1="265.5" x2="1109" y2="265.5" stroke="#333" stroke-width="1"/>
<line x1="1104" y1="255.5" x2="1109" y2="255.5" stroke="#333" stroke-width="1"/>
<line x1="1104" y1="248.5" x2="1109" y2="248.5" stroke="#333" stroke-width="1"/>
<line x1="1104" y1="242.5" x2="1109" y2="242.5" stroke="#333" stroke-width="1"/>
<line x1="1104" y1="238.5" x2="1109" y2="238.5" stroke="#333" stroke-width="1"/>
<line x1="1104" y1="234.5" x2="1109" y2="234.5" stroke="#333" stroke-width="1"/>
<line x1="1104" y1="230.5" x2="1109" y2="230.5" stroke="#333" stroke-width="1"/>
<line x1="1104" y1="228.5" x2="1109" y2="228.5" stroke="#333" stroke-width="1"/>
<line x1="1104" y1="323.5" x2="1109" y2="323.5" stroke="#333" stroke-width="1"/>
<line x1="1104" y1="313.5" x2="1109" y2="313.5" stroke="#333" stroke-width="1"/>
<line x1="1104" y1="306.5" x2="1109" y2="306.5" stroke="#333" stroke-width="1"/>
<line x1="1104" y1="300.5" x2="1109" y2="300.5" stroke="#333" stroke-width="1"/>
<line x1="1104" y1="295.5" x2="1109" y2="295.5" stroke="#333" stroke-width="1"/>
<line x1="1104" y1="292.5" x2="1109" y2="292.5" stroke="#333" stroke-width="1"/>
<line x1="1104" y1="288.5" x2="1109" y2="288.5" stroke="#333" stroke-width="1"/>
<line x1="1104" y1="285.5" x2="1109" y2="285.5" stroke="#333" stroke-width="1"/>
<line x1="1104" y1="381.5" x2="1109" y2="381.5" stroke="#333" stroke-width="1"/>
<line x1="1104" y1="370.5" x2="1109" y2="370.5" stroke="#333" stroke-width="1"/>
<line x1="1104" y1="363.5" x2="1109" y2="363.5" stroke="#333" stroke-width="1"/>
<line x1="1104" y1="358.5" x2="1109" y2="358.5" stroke="#333" stroke-width="1"/>
<line x1="1104" y1="353.5" x2="1109" y2="353.5" stroke="#333" stroke-width="1"/>
<line x1="1104" y1="349.5" x2="1109" y2="349.5" stroke="#333" stroke-width="1"/>
<line x1="1104" y1="346.5" x2="1109" y2="346.5" stroke="#333" stroke-width="1"/>
<line x1="1104" y1="343.5" x2="1109" y2="343.5" stroke="#333" stroke-width="1"/>
<line x1="1104" y1="415.5" x2="1109" y2="415.5" stroke="#333" stroke-width="1"/>
<line x1="1104" y1="411.5" x2="1109" y2="411.5" stroke="#333" stroke-width="1"/>
<line x1="1104" y1="407.5" x2="1109" y2="407.5" stroke="#333" stroke-width="1"/>
<line x1="1104" y1="404.5" x2="1109" y2="404.5" stroke="#333" stroke-width="1"/>
<line x1="1104" y1="401.5" x2="1109" y2="401.5" stroke="#333" stroke-width="1"/>
<text x="1117.5" y="231.9" font-size="12" textLength="13.2" lengthAdjust="spacing" fill="#484848">10</text>
<text x="1133.0" y="225.9" font-size="12" textLength="13.8" lengthAdjust="spacing" fill="#484848">−9</text>
<text x="1117.5" y="289.6" font-size="12" textLength="13.2" lengthAdjust="spacing" fill="#484848">10</text>
<text x="1133.0" y="283.6" font-size="12" textLength="20.1" lengthAdjust="spacing" fill="#484848">−10</text>
<text x="1117.5" y="347.3" font-size="12" textLength="13.2" lengthAdjust="spacing" fill="#484848">10</text>
<text x="1133.0" y="341.3" font-size="12" textLength="20.1" lengthAdjust="spacing" fill="#484848">−11</text>
<text x="1117.5" y="405.0" font-size="12" textLength="13.2" lengthAdjust="spacing" fill="#484848">10</text>
<text x="1133.0" y="399.0" font-size="12" textLength="20.1" lengthAdjust="spacing" fill="#484848">−12</text>
<text x="1165.0" y="321.2" font-size="12" text-anchor="middle" textLength="121.0" lengthAdjust="spacing" transform="rotate(90 1165 321.25)" fill="#484848">pressure dyne/cm^2</text>
<rect x="1092" y="514.75" width="12" height="176.45000000000005" fill="url(#cb)"/>
<line x1="1104.5" y1="513.75" x2="1104.5" y2="691.7" stroke="#333" stroke-width="1"/>
<line x1="1104" y1="515.5" x2="1113" y2="515.5" stroke="#333" stroke-width="1"/>
<line x1="1104" y1="554.5" x2="1113" y2="554.5" stroke="#333" stroke-width="1"/>
<line x1="1104" y1="593.5" x2="1113" y2="593.5" stroke="#333" stroke-width="1"/>
<line x1="1104" y1="632.5" x2="1113" y2="632.5" stroke="#333" stroke-width="1"/>
<line x1="1104" y1="671.5" x2="1113" y2="671.5" stroke="#333" stroke-width="1"/>
<line x1="1104" y1="535.5" x2="1109" y2="535.5" stroke="#333" stroke-width="1"/>
<line x1="1104" y1="574.5" x2="1109" y2="574.5" stroke="#333" stroke-width="1"/>
<line x1="1104" y1="613.5" x2="1109" y2="613.5" stroke="#333" stroke-width="1"/>
<line x1="1104" y1="652.5" x2="1109" y2="652.5" stroke="#333" stroke-width="1"/>
<line x1="1104" y1="691.5" x2="1109" y2="691.5" stroke="#333" stroke-width="1"/>
<text x="1117.5" y="522.1" font-size="12" textLength="13.2" lengthAdjust="spacing" fill="#484848">10</text>
<text x="1133.0" y="516.1" font-size="12" textLength="5.3" lengthAdjust="spacing" fill="#484848">4</text>
<text x="1117.5" y="561.1" font-size="12" textLength="13.2" lengthAdjust="spacing" fill="#484848">10</text>
<text x="1133.0" y="555.1" font-size="12" textLength="5.3" lengthAdjust="spacing" fill="#484848">2</text>
<text x="1117.5" y="600.1" font-size="12" textLength="13.2" lengthAdjust="spacing" fill="#484848">10</text>
<text x="1133.0" y="594.1" font-size="12" textLength="5.3" lengthAdjust="spacing" fill="#484848">0</text>
<text x="1117.5" y="639.1" font-size="12" textLength="13.2" lengthAdjust="spacing" fill="#484848">10</text>
<text x="1133.0" y="633.1" font-size="12" textLength="13.8" lengthAdjust="spacing" fill="#484848">−2</text>
<text x="1117.5" y="678.1" font-size="12" textLength="13.2" lengthAdjust="spacing" fill="#484848">10</text>
<text x="1133.0" y="672.1" font-size="12" textLength="13.8" lengthAdjust="spacing" fill="#484848">−4</text>
<text x="1158.0" y="603.0" font-size="12" text-anchor="middle" textLength="168.0" lengthAdjust="spacing" transform="rotate(90 1158 602.975)" fill="#484848">intensity 1/(s cm^2 ster keV)</text>
<line x1="1091" y1="426.9" x2="1103" y2="431.4" stroke="#0000ff" stroke-width="1.6" shape-rendering="auto"/>
<text x="1108.0" y="434.0" font-size="12" textLength="53.0" lengthAdjust="spacing" fill="#484848">CHEMS–P</text>
<line x1="1091" y1="443.6" x2="1103" y2="448.1" stroke="#ff0000" stroke-width="1.6" shape-rendering="auto"/>
<text x="1108.0" y="450.7" font-size="12" textLength="53.0" lengthAdjust="spacing" fill="#484848">LEMMS–P</text>
<line x1="1091" y1="460.3" x2="1103" y2="464.8" stroke="#00ff00" stroke-width="1.6" shape-rendering="auto"/>
<text x="1108.0" y="467.4" font-size="12" textLength="53.0" lengthAdjust="spacing" fill="#484848">CHEMS–O</text>
<line x1="136.5" y1="218" x2="136.5" y2="220" stroke="#444"/>
<line x1="177.5" y1="218" x2="177.5" y2="220" stroke="#444"/>
<line x1="218.5" y1="217" x2="218.5" y2="220" stroke="#444"/>
<line x1="259.5" y1="218" x2="259.5" y2="220" stroke="#444"/>
<line x1="300.5" y1="218" x2="300.5" y2="220" stroke="#444"/>
<line x1="341.5" y1="217" x2="341.5" y2="220" stroke="#444"/>
<line x1="382.5" y1="218" x2="382.5" y2="220" stroke="#444"/>
<line x1="423.5" y1="218" x2="423.5" y2="220" stroke="#444"/>
<line x1="464.5" y1="217" x2="464.5" y2="220" stroke="#444"/>
<line x1="505.5" y1="218" x2="505.5" y2="220" stroke="#444"/>
<line x1="546.5" y1="218" x2="546.5" y2="220" stroke="#444"/>
<line x1="587.5" y1="217" x2="587.5" y2="220" stroke="#444"/>
<line x1="628.5" y1="218" x2="628.5" y2="220" stroke="#444"/>
<line x1="669.5" y1="218" x2="669.5" y2="220" stroke="#444"/>
<line x1="710.5" y1="217" x2="710.5" y2="220" stroke="#444"/>
<line x1="751.5" y1="218" x2="751.5" y2="220" stroke="#444"/>
<line x1="792.5" y1="218" x2="792.5" y2="220" stroke="#444"/>
<line x1="833.5" y1="217" x2="833.5" y2="220" stroke="#444"/>
<line x1="874.5" y1="218" x2="874.5" y2="220" stroke="#444"/>
<line x1="915.5" y1="218" x2="915.5" y2="220" stroke="#444"/>
<line x1="956.5" y1="217" x2="956.5" y2="220" stroke="#444"/>
<line x1="997.5" y1="218" x2="997.5" y2="220" stroke="#444"/>
<line x1="1038.5" y1="218" x2="1038.5" y2="220" stroke="#444"/>
<line x1="136.5" y1="414" x2="136.5" y2="416" stroke="#444"/>
<line x1="177.5" y1="414" x2="177.5" y2="416" stroke="#444"/>
<line x1="218.5" y1="413" x2="218.5" y2="416" stroke="#444"/>
<line x1="259.5" y1="414" x2="259.5" y2="416" stroke="#444"/>
<line x1="300.5" y1="414" x2="300.5" y2="416" stroke="#444"/>
<line x1="341.5" y1="413" x2="341.5" y2="416" stroke="#444"/>
<line x1="382.5" y1="414" x2="382.5" y2="416" stroke="#444"/>
<line x1="423.5" y1="414" x2="423.5" y2="416" stroke="#444"/>
<line x1="464.5" y1="413" x2="464.5" y2="416" stroke="#444"/>
<line x1="505.5" y1="414" x2="505.5" y2="416" stroke="#444"/>
<line x1="546.5" y1="414" x2="546.5" y2="416" stroke="#444"/>
<line x1="587.5" y1="413" x2="587.5" y2="416" stroke="#444"/>
<line x1="628.5" y1="414" x2="628.5" y2="416" stroke="#444"/>
<line x1="669.5" y1="414" x2="669.5" y2="416" stroke="#444"/>
<line x1="710.5" y1="413" x2="710.5" y2="416" stroke="#444"/>
<line x1="751.5" y1="414" x2="751.5" y2="416" stroke="#444"/>
<line x1="792.5" y1="414" x2="792.5" y2="416" stroke="#444"/>
<line x1="833.5" y1="413" x2="833.5" y2="416" stroke="#444"/>
<line x1="874.5" y1="414" x2="874.5" y2="416" stroke="#444"/>
<line x1="915.5" y1="414" x2="915.5" y2="416" stroke="#444"/>
<line x1="956.5" y1="413" x2="956.5" y2="416" stroke="#444"/>
<line x1="997.5" y1="414" x2="997.5" y2="416" stroke="#444"/>
<line x1="1038.5" y1="414" x2="1038.5" y2="416" stroke="#444"/>
<line x1="136.5" y1="507" x2="136.5" y2="509" stroke="#333"/>
<line x1="177.5" y1="507" x2="177.5" y2="509" stroke="#333"/>
<line x1="218.5" y1="506" x2="218.5" y2="509" stroke="#333"/>
<line x1="259.5" y1="507" x2="259.5" y2="509" stroke="#333"/>
<line x1="300.5" y1="507" x2="300.5" y2="509" stroke="#333"/>
<line x1="341.5" y1="506" x2="341.5" y2="509" stroke="#333"/>
<line x1="382.5" y1="507" x2="382.5" y2="509" stroke="#333"/>
<line x1="423.5" y1="507" x2="423.5" y2="509" stroke="#333"/>
<line x1="464.5" y1="506" x2="464.5" y2="509" stroke="#333"/>
<line x1="505.5" y1="507" x2="505.5" y2="509" stroke="#333"/>
<line x1="546.5" y1="507" x2="546.5" y2="509" stroke="#333"/>
<line x1="587.5" y1="506" x2="587.5" y2="509" stroke="#333"/>
<line x1="628.5" y1="507" x2="628.5" y2="509" stroke="#333"/>
<line x1="669.5" y1="507" x2="669.5" y2="509" stroke="#333"/>
<line x1="710.5" y1="506" x2="710.5" y2="509" stroke="#333"/>
<line x1="751.5" y1="507" x2="751.5" y2="509" stroke="#333"/>
<line x1="792.5" y1="507" x2="792.5" y2="509" stroke="#333"/>
<line x1="833.5" y1="506" x2="833.5" y2="509" stroke="#333"/>
<line x1="874.5" y1="507" x2="874.5" y2="509" stroke="#333"/>
<line x1="915.5" y1="507" x2="915.5" y2="509" stroke="#333"/>
<line x1="956.5" y1="506" x2="956.5" y2="509" stroke="#333"/>
<line x1="997.5" y1="507" x2="997.5" y2="509" stroke="#333"/>
<line x1="1038.5" y1="507" x2="1038.5" y2="509" stroke="#333"/>
<line x1="136.5" y1="689" x2="136.5" y2="691" stroke="#444"/>
<line x1="177.5" y1="689" x2="177.5" y2="691" stroke="#444"/>
<line x1="218.5" y1="688" x2="218.5" y2="691" stroke="#444"/>
<line x1="259.5" y1="689" x2="259.5" y2="691" stroke="#444"/>
<line x1="300.5" y1="689" x2="300.5" y2="691" stroke="#444"/>
<line x1="341.5" y1="688" x2="341.5" y2="691" stroke="#444"/>
<line x1="382.5" y1="689" x2="382.5" y2="691" stroke="#444"/>
<line x1="423.5" y1="689" x2="423.5" y2="691" stroke="#444"/>
<line x1="464.5" y1="688" x2="464.5" y2="691" stroke="#444"/>
<line x1="505.5" y1="689" x2="505.5" y2="691" stroke="#444"/>
<line x1="546.5" y1="689" x2="546.5" y2="691" stroke="#444"/>
<line x1="587.5" y1="688" x2="587.5" y2="691" stroke="#444"/>
<line x1="628.5" y1="689" x2="628.5" y2="691" stroke="#444"/>
<line x1="669.5" y1="689" x2="669.5" y2="691" stroke="#444"/>
<line x1="710.5" y1="688" x2="710.5" y2="691" stroke="#444"/>
<line x1="751.5" y1="689" x2="751.5" y2="691" stroke="#444"/>
<line x1="792.5" y1="689" x2="792.5" y2="691" stroke="#444"/>
<line x1="833.5" y1="688" x2="833.5" y2="691" stroke="#444"/>
<line x1="874.5" y1="689" x2="874.5" y2="691" stroke="#444"/>
<line x1="915.5" y1="689" x2="915.5" y2="691" stroke="#444"/>
<line x1="956.5" y1="688" x2="956.5" y2="691" stroke="#444"/>
<line x1="997.5" y1="689" x2="997.5" y2="691" stroke="#444"/>
<line x1="1038.5" y1="689" x2="1038.5" y2="691" stroke="#444"/>
<g>
<clipPath id="oc0"><rect x="216" y="803" width="150" height="147"/></clipPath>
<g clip-path="url(#oc0)" shape-rendering="auto">
<path d="M251.1,798.8 L250.1,800.4 L249.1,801.9 L248.1,803.5 L247.2,805.0 L246.2,806.6 L245.3,808.1 L244.4,809.7 L243.5,811.2 L242.7,812.8 L241.9,814.3 L241.0,815.9 L240.3,817.4 L239.5,819.0 L238.7,820.6 L238.0,822.1 L237.3,823.7 L236.6,825.2 L235.9,826.8 L235.3,828.3 L234.7,829.9 L234.1,831.4 L233.5,833.0 L232.9,834.5 L232.4,836.1 L231.8,837.6 L231.3,839.2 L230.8,840.8 L230.4,842.3 L229.9,843.9 L229.5,845.4 L229.1,847.0 L228.7,848.5 L228.4,850.1 L228.0,851.6 L227.7,853.2 L227.4,854.7 L227.1,856.3 L226.9,857.9 L226.7,859.4 L226.4,861.0 L226.2,862.5 L226.1,864.1 L225.9,865.6 L225.8,867.2 L225.7,868.7 L225.6,870.3 L225.5,871.8 L225.5,873.4 L225.4,874.9 L225.4,876.5 L225.4,878.1 L225.5,879.6 L225.5,881.2 L225.6,882.7 L225.7,884.3 L225.8,885.8 L225.9,887.4 L226.1,888.9 L226.2,890.5 L226.4,892.0 L226.7,893.6 L226.9,895.1 L227.1,896.7 L227.4,898.3 L227.7,899.8 L228.0,901.4 L228.4,902.9 L228.7,904.5 L229.1,906.0 L229.5,907.6 L229.9,909.1 L230.4,910.7 L230.8,912.2 L231.3,913.8 L231.8,915.4 L232.4,916.9 L232.9,918.5 L233.5,920.0 L234.1,921.6 L234.7,923.1 L235.3,924.7 L235.9,926.2 L236.6,927.8 L237.3,929.3 L238.0,930.9 L238.7,932.4 L239.5,934.0 L240.3,935.6 L241.0,937.1 L241.9,938.7 L242.7,940.2 L243.5,941.8 L244.4,943.3 L245.3,944.9 L246.2,946.4 L247.2,948.0 L248.1,949.5 L249.1,951.1 L250.1,952.6 L251.1,954.2" fill="none" stroke="#0000ff" stroke-width="1.1" stroke-dasharray="2.6,1.3"/>
<path d="M288.1,798.8 L286.3,800.4 L284.6,801.9 L282.8,803.5 L281.1,805.0 L279.5,806.6 L277.8,808.1 L276.2,809.7 L274.7,811.2 L273.2,812.8 L271.7,814.3 L270.2,815.9 L268.8,817.4 L267.4,819.0 L266.1,820.6 L264.8,822.1 L263.6,823.7 L262.3,825.2 L261.1,826.8 L260.0,828.3 L258.9,829.9 L257.8,831.4 L256.7,833.0 L255.7,834.5 L254.8,836.1 L253.8,837.6 L252.9,839.2 L252.1,840.8 L251.3,842.3 L250.5,843.9 L249.7,845.4 L249.0,847.0 L248.3,848.5 L247.7,850.1 L247.1,851.6 L246.5,853.2 L246.0,854.7 L245.5,856.3 L245.0,857.9 L244.6,859.4 L244.2,861.0 L243.9,862.5 L243.6,864.1 L243.3,865.6 L243.1,867.2 L242.9,868.7 L242.7,870.3 L242.6,871.8 L242.5,873.4 L242.4,874.9 L242.4,876.5 L242.4,878.1 L242.5,879.6 L242.6,881.2 L242.7,882.7 L242.9,884.3 L243.1,885.8 L243.3,887.4 L243.6,888.9 L243.9,890.5 L244.2,892.0 L244.6,893.6 L245.0,895.1 L245.5,896.7 L246.0,898.3 L246.5,899.8 L247.1,901.4 L247.7,902.9 L248.3,904.5 L249.0,906.0 L249.7,907.6 L250.5,909.1 L251.3,910.7 L252.1,912.2 L252.9,913.8 L253.8,915.4 L254.8,916.9 L255.7,918.5 L256.7,920.0 L257.8,921.6 L258.9,923.1 L260.0,924.7 L261.1,926.2 L262.3,927.8 L263.6,929.3 L264.8,930.9 L266.1,932.4 L267.4,934.0 L268.8,935.6 L270.2,937.1 L271.7,938.7 L273.2,940.2 L274.7,941.8 L276.2,943.3 L277.8,944.9 L279.5,946.4 L281.1,948.0 L282.8,949.5 L284.6,951.1 L286.3,952.6 L288.1,954.2" fill="none" stroke="#8b5a2b" stroke-width="1.1" stroke-dasharray="2.6,1.3"/>
<ellipse cx="292" cy="877.6" rx="36.6" ry="37" fill="none" stroke="#000" stroke-width="1.15"/>
<ellipse cx="291.7" cy="877" rx="1.8" ry="1.3" fill="none" stroke="#000" stroke-width="1"/>
<path d="M254.40,899.20 L254.31,899.80 L254.18,900.59 L254.02,901.52 L253.86,902.57 L253.68,903.68 L253.51,904.82 L253.34,905.94 L253.20,907.00 L253.06,908.03 L252.91,909.09 L252.75,910.16 L252.61,911.24 L252.48,912.32 L252.38,913.39 L252.31,914.46 L252.30,915.50 L252.33,916.52 L252.38,917.54 L252.47,918.54 L252.59,919.53 L252.74,920.52 L252.92,921.51 L253.14,922.50 L253.40,923.50 L253.70,924.52 L254.04,925.55 L254.41,926.60 L254.82,927.64 L255.26,928.67 L255.72,929.66 L256.20,930.61 L256.70,931.50 L257.21,932.32 L257.73,933.09 L258.28,933.81 L258.84,934.49 L259.44,935.16 L260.08,935.83 L260.77,936.50 L261.50,937.20 L262.29,937.94 L263.14,938.71 L264.04,939.50 L264.97,940.29 L265.94,941.04 L266.92,941.74 L267.91,942.37 L268.90,942.90 L269.96,943.33 L271.13,943.69 L272.35,943.97 L273.56,944.21 L274.72,944.39 L275.77,944.55 L276.65,944.68 L277.30,944.80" fill="none" stroke="#000" stroke-width="1.15"/>
<path d="M256,933 L261.5,937.5" stroke="#0000ff" stroke-width="4.5" stroke-linecap="round"/>
<path d="M252,927.3 L260.9,936.1 M252,936.1 L260.9,927.3" stroke="#ff2020" stroke-width="1"/>
<circle cx="257.3" cy="888.9" r="2.6" fill="#ff0000"/>
</g>
<rect x="215.5" y="802.5" width="151" height="148" fill="none" stroke="#333"/>
<line x1="207" y1="802.5" x2="215" y2="802.5" stroke="#333"/>
<line x1="211" y1="804.5" x2="215" y2="804.5" stroke="#333"/>
<line x1="211" y1="806.5" x2="215" y2="806.5" stroke="#333"/>
<line x1="211" y1="808.5" x2="215" y2="808.5" stroke="#333"/>
<line x1="211" y1="809.5" x2="215" y2="809.5" stroke="#333"/>
<line x1="211" y1="811.5" x2="215" y2="811.5" stroke="#333"/>
<line x1="211" y1="813.5" x2="215" y2="813.5" stroke="#333"/>
<line x1="211" y1="815.5" x2="215" y2="815.5" stroke="#333"/>
<line x1="211" y1="817.5" x2="215" y2="817.5" stroke="#333"/>
<line x1="211" y1="819.5" x2="215" y2="819.5" stroke="#333"/>
<line x1="207" y1="820.5" x2="215" y2="820.5" stroke="#333"/>
<line x1="211" y1="822.5" x2="215" y2="822.5" stroke="#333"/>
<line x1="211" y1="824.5" x2="215" y2="824.5" stroke="#333"/>
<line x1="211" y1="826.5" x2="215" y2="826.5" stroke="#333"/>
<line x1="211" y1="828.5" x2="215" y2="828.5" stroke="#333"/>
<line x1="211" y1="830.5" x2="215" y2="830.5" stroke="#333"/>
<line x1="211" y1="832.5" x2="215" y2="832.5" stroke="#333"/>
<line x1="211" y1="833.5" x2="215" y2="833.5" stroke="#333"/>
<line x1="211" y1="835.5" x2="215" y2="835.5" stroke="#333"/>
<line x1="211" y1="837.5" x2="215" y2="837.5" stroke="#333"/>
<line x1="207" y1="839.5" x2="215" y2="839.5" stroke="#333"/>
<line x1="211" y1="841.5" x2="215" y2="841.5" stroke="#333"/>
<line x1="211" y1="843.5" x2="215" y2="843.5" stroke="#333"/>
<line x1="211" y1="845.5" x2="215" y2="845.5" stroke="#333"/>
<line x1="211" y1="846.5" x2="215" y2="846.5" stroke="#333"/>
<line x1="211" y1="848.5" x2="215" y2="848.5" stroke="#333"/>
<line x1="211" y1="850.5" x2="215" y2="850.5" stroke="#333"/>
<line x1="211" y1="852.5" x2="215" y2="852.5" stroke="#333"/>
<line x1="211" y1="854.5" x2="215" y2="854.5" stroke="#333"/>
<line x1="211" y1="856.5" x2="215" y2="856.5" stroke="#333"/>
<line x1="207" y1="858.5" x2="215" y2="858.5" stroke="#333"/>
<line x1="211" y1="859.5" x2="215" y2="859.5" stroke="#333"/>
<line x1="211" y1="861.5" x2="215" y2="861.5" stroke="#333"/>
<line x1="211" y1="863.5" x2="215" y2="863.5" stroke="#333"/>
<line x1="211" y1="865.5" x2="215" y2="865.5" stroke="#333"/>
<line x1="211" y1="867.5" x2="215" y2="867.5" stroke="#333"/>
<line x1="211" y1="869.5" x2="215" y2="869.5" stroke="#333"/>
<line x1="211" y1="870.5" x2="215" y2="870.5" stroke="#333"/>
<line x1="211" y1="872.5" x2="215" y2="872.5" stroke="#333"/>
<line x1="211" y1="874.5" x2="215" y2="874.5" stroke="#333"/>
<line x1="207" y1="876.5" x2="215" y2="876.5" stroke="#333"/>
<line x1="211" y1="878.5" x2="215" y2="878.5" stroke="#333"/>
<line x1="211" y1="880.5" x2="215" y2="880.5" stroke="#333"/>
<line x1="211" y1="882.5" x2="215" y2="882.5" stroke="#333"/>
<line x1="211" y1="883.5" x2="215" y2="883.5" stroke="#333"/>
<line x1="211" y1="885.5" x2="215" y2="885.5" stroke="#333"/>
<line x1="211" y1="887.5" x2="215" y2="887.5" stroke="#333"/>
<line x1="211" y1="889.5" x2="215" y2="889.5" stroke="#333"/>
<line x1="211" y1="891.5" x2="215" y2="891.5" stroke="#333"/>
<line x1="211" y1="893.5" x2="215" y2="893.5" stroke="#333"/>
<line x1="207" y1="894.5" x2="215" y2="894.5" stroke="#333"/>
<line x1="211" y1="896.5" x2="215" y2="896.5" stroke="#333"/>
<line x1="211" y1="898.5" x2="215" y2="898.5" stroke="#333"/>
<line x1="211" y1="900.5" x2="215" y2="900.5" stroke="#333"/>
<line x1="211" y1="902.5" x2="215" y2="902.5" stroke="#333"/>
<line x1="211" y1="904.5" x2="215" y2="904.5" stroke="#333"/>
<line x1="211" y1="906.5" x2="215" y2="906.5" stroke="#333"/>
<line x1="211" y1="907.5" x2="215" y2="907.5" stroke="#333"/>
<line x1="211" y1="909.5" x2="215" y2="909.5" stroke="#333"/>
<line x1="211" y1="911.5" x2="215" y2="911.5" stroke="#333"/>
<line x1="207" y1="913.5" x2="215" y2="913.5" stroke="#333"/>
<line x1="211" y1="915.5" x2="215" y2="915.5" stroke="#333"/>
<line x1="211" y1="917.5" x2="215" y2="917.5" stroke="#333"/>
<line x1="211" y1="919.5" x2="215" y2="919.5" stroke="#333"/>
<line x1="211" y1="920.5" x2="215" y2="920.5" stroke="#333"/>
<line x1="211" y1="922.5" x2="215" y2="922.5" stroke="#333"/>
<line x1="211" y1="924.5" x2="215" y2="924.5" stroke="#333"/>
<line x1="211" y1="926.5" x2="215" y2="926.5" stroke="#333"/>
<line x1="211" y1="928.5" x2="215" y2="928.5" stroke="#333"/>
<line x1="211" y1="930.5" x2="215" y2="930.5" stroke="#333"/>
<line x1="207" y1="932.5" x2="215" y2="932.5" stroke="#333"/>
<line x1="211" y1="933.5" x2="215" y2="933.5" stroke="#333"/>
<line x1="211" y1="935.5" x2="215" y2="935.5" stroke="#333"/>
<line x1="211" y1="937.5" x2="215" y2="937.5" stroke="#333"/>
<line x1="211" y1="939.5" x2="215" y2="939.5" stroke="#333"/>
<line x1="211" y1="941.5" x2="215" y2="941.5" stroke="#333"/>
<line x1="211" y1="943.5" x2="215" y2="943.5" stroke="#333"/>
<line x1="211" y1="944.5" x2="215" y2="944.5" stroke="#333"/>
<line x1="211" y1="946.5" x2="215" y2="946.5" stroke="#333"/>
<line x1="211" y1="948.5" x2="215" y2="948.5" stroke="#333"/>
<line x1="207" y1="950.5" x2="215" y2="950.5" stroke="#333"/>
<text x="201.5" y="806.9" font-size="12" text-anchor="end" textLength="24.7" lengthAdjust="spacing" fill="#484848">−40.</text>
<text x="201.5" y="825.4" font-size="12" text-anchor="end" textLength="24.7" lengthAdjust="spacing" fill="#484848">−30.</text>
<text x="201.5" y="843.9" font-size="12" text-anchor="end" textLength="24.7" lengthAdjust="spacing" fill="#484848">−20.</text>
<text x="201.5" y="862.4" font-size="12" text-anchor="end" textLength="24.7" lengthAdjust="spacing" fill="#484848">−10.</text>
<text x="201.5" y="880.9" font-size="12" text-anchor="end" textLength="10.2" lengthAdjust="spacing" fill="#484848">0.</text>
<text x="201.5" y="899.4" font-size="12" text-anchor="end" textLength="16.9" lengthAdjust="spacing" fill="#484848">10.</text>
<text x="201.5" y="917.9" font-size="12" text-anchor="end" textLength="16.9" lengthAdjust="spacing" fill="#484848">20.</text>
<text x="201.5" y="936.4" font-size="12" text-anchor="end" textLength="16.9" lengthAdjust="spacing" fill="#484848">30.</text>
<text x="201.5" y="954.9" font-size="12" text-anchor="end" textLength="16.9" lengthAdjust="spacing" fill="#484848">40.</text>
<line x1="215.5" y1="950" x2="215.5" y2="958" stroke="#333"/>
<line x1="234.5" y1="950" x2="234.5" y2="954" stroke="#333"/>
<line x1="253.5" y1="950" x2="253.5" y2="958" stroke="#333"/>
<line x1="272.5" y1="950" x2="272.5" y2="954" stroke="#333"/>
<line x1="290.5" y1="950" x2="290.5" y2="958" stroke="#333"/>
<line x1="309.5" y1="950" x2="309.5" y2="954" stroke="#333"/>
<line x1="328.5" y1="950" x2="328.5" y2="958" stroke="#333"/>
<line x1="347.5" y1="950" x2="347.5" y2="954" stroke="#333"/>
<line x1="366.5" y1="950" x2="366.5" y2="958" stroke="#333"/>
<text x="217.5" y="974.5" font-size="12" text-anchor="middle" textLength="16.9" lengthAdjust="spacing" fill="#484848">40.</text>
<text x="255.2" y="974.5" font-size="12" text-anchor="middle" textLength="16.9" lengthAdjust="spacing" fill="#484848">20.</text>
<text x="293.0" y="974.5" font-size="12" text-anchor="middle" textLength="10.2" lengthAdjust="spacing" fill="#484848">0.</text>
<text x="328.8" y="974.5" font-size="12" text-anchor="middle" textLength="24.7" lengthAdjust="spacing" fill="#484848">−20.</text>
<text x="366.5" y="974.5" font-size="12" text-anchor="middle" textLength="24.7" lengthAdjust="spacing" fill="#484848">−40.</text>
<text x="290.5" y="991.7" font-size="12" text-anchor="middle" textLength="37.5" lengthAdjust="spacing" fill="#484848">KSM–X</text>
<text x="165.5" y="876.0" font-size="12" text-anchor="middle" textLength="38.0" lengthAdjust="spacing" transform="rotate(-90 165.5 876)" fill="#484848">KSM–Y</text>
</g>
<g>
<clipPath id="oc1"><rect x="510" y="803" width="150" height="147"/></clipPath>
<g clip-path="url(#oc1)" shape-rendering="auto">
<path d="M545.1,954.2 L544.1,952.6 L543.1,951.1 L542.1,949.5 L541.2,948.0 L540.2,946.4 L539.3,944.9 L538.4,943.3 L537.5,941.8 L536.7,940.2 L535.9,938.7 L535.0,937.1 L534.3,935.6 L533.5,934.0 L532.7,932.4 L532.0,930.9 L531.3,929.3 L530.6,927.8 L529.9,926.2 L529.3,924.7 L528.7,923.1 L528.1,921.6 L527.5,920.0 L526.9,918.5 L526.4,916.9 L525.8,915.4 L525.3,913.8 L524.8,912.2 L524.4,910.7 L523.9,909.1 L523.5,907.6 L523.1,906.0 L522.7,904.5 L522.4,902.9 L522.0,901.4 L521.7,899.8 L521.4,898.3 L521.1,896.7 L520.9,895.1 L520.7,893.6 L520.4,892.0 L520.2,890.5 L520.1,888.9 L519.9,887.4 L519.8,885.8 L519.7,884.3 L519.6,882.7 L519.5,881.2 L519.5,879.6 L519.4,878.1 L519.4,876.5 L519.4,874.9 L519.5,873.4 L519.5,871.8 L519.6,870.3 L519.7,868.7 L519.8,867.2 L519.9,865.6 L520.1,864.1 L520.2,862.5 L520.4,861.0 L520.7,859.4 L520.9,857.9 L521.1,856.3 L521.4,854.7 L521.7,853.2 L522.0,851.6 L522.4,850.1 L522.7,848.5 L523.1,847.0 L523.5,845.4 L523.9,843.9 L524.4,842.3 L524.8,840.8 L525.3,839.2 L525.8,837.6 L526.4,836.1 L526.9,834.5 L527.5,833.0 L528.1,831.4 L528.7,829.9 L529.3,828.3 L529.9,826.8 L530.6,825.2 L531.3,823.7 L532.0,822.1 L532.7,820.6 L533.5,819.0 L534.3,817.4 L535.0,815.9 L535.9,814.3 L536.7,812.8 L537.5,811.2 L538.4,809.7 L539.3,808.1 L540.2,806.6 L541.2,805.0 L542.1,803.5 L543.1,801.9 L544.1,800.4 L545.1,798.8" fill="none" stroke="#0000ff" stroke-width="1.1" stroke-dasharray="2.6,1.3"/>
<path d="M582.1,954.2 L580.3,952.6 L578.6,951.1 L576.8,949.5 L575.1,948.0 L573.5,946.4 L571.8,944.9 L570.2,943.3 L568.7,941.8 L567.2,940.2 L565.7,938.7 L564.2,937.1 L562.8,935.6 L561.4,934.0 L560.1,932.4 L558.8,930.9 L557.6,929.3 L556.3,927.8 L555.1,926.2 L554.0,924.7 L552.9,923.1 L551.8,921.6 L550.7,920.0 L549.7,918.5 L548.8,916.9 L547.8,915.4 L546.9,913.8 L546.1,912.2 L545.3,910.7 L544.5,909.1 L543.7,907.6 L543.0,906.0 L542.3,904.5 L541.7,902.9 L541.1,901.4 L540.5,899.8 L540.0,898.3 L539.5,896.7 L539.0,895.1 L538.6,893.6 L538.2,892.0 L537.9,890.5 L537.6,888.9 L537.3,887.4 L537.1,885.8 L536.9,884.3 L536.7,882.7 L536.6,881.2 L536.5,879.6 L536.4,878.1 L536.4,876.5 L536.4,874.9 L536.5,873.4 L536.6,871.8 L536.7,870.3 L536.9,868.7 L537.1,867.2 L537.3,865.6 L537.6,864.1 L537.9,862.5 L538.2,861.0 L538.6,859.4 L539.0,857.9 L539.5,856.3 L540.0,854.7 L540.5,853.2 L541.1,851.6 L541.7,850.1 L542.3,848.5 L543.0,847.0 L543.7,845.4 L544.5,843.9 L545.3,842.3 L546.1,840.8 L546.9,839.2 L547.8,837.6 L548.8,836.1 L549.7,834.5 L550.7,833.0 L551.8,831.4 L552.9,829.9 L554.0,828.3 L555.1,826.8 L556.3,825.2 L557.6,823.7 L558.8,822.1 L560.1,820.6 L561.4,819.0 L562.8,817.4 L564.2,815.9 L565.7,814.3 L567.2,812.8 L568.7,811.2 L570.2,809.7 L571.8,808.1 L573.5,806.6 L575.1,805.0 L576.8,803.5 L578.6,801.9 L580.3,800.4 L582.1,798.8" fill="none" stroke="#8b5a2b" stroke-width="1.1" stroke-dasharray="2.6,1.3"/>
<path d="M551,886 L622.8,866.7" stroke="#000" stroke-width="1.7"/>
<ellipse cx="585.2" cy="876.7" rx="1.8" ry="1.3" fill="none" stroke="#555" stroke-width="1"/>
<path d="M548.90,889.90 L548.70,890.51 L548.41,891.32 L548.06,892.30 L547.69,893.38 L547.32,894.51 L547.00,895.64 L546.75,896.72 L546.60,897.70 L546.55,898.61 L546.55,899.52 L546.61,900.41 L546.71,901.29 L546.87,902.14 L547.07,902.96 L547.31,903.75 L547.60,904.50 L547.92,905.20 L548.28,905.84 L548.68,906.45 L549.12,907.03 L549.62,907.60 L550.18,908.15 L550.81,908.72 L551.50,909.30 L552.25,909.91 L553.04,910.56 L553.89,911.21 L554.80,911.86 L555.79,912.48 L556.86,913.05 L558.03,913.57 L559.30,914.00 L560.81,914.35 L562.59,914.64 L564.54,914.86 L566.54,915.04 L568.48,915.19 L570.24,915.31 L571.72,915.41 L572.80,915.50" fill="none" stroke="#000" stroke-width="1.15"/>
<path d="M550.5,908.3 L554.2,911.2" stroke="#0000ff" stroke-width="4.5" stroke-linecap="round"/>
<path d="M545.9,904 L554.9,913 M545.9,913 L554.9,904" stroke="#ff2020" stroke-width="1"/>
<circle cx="551" cy="886" r="2.6" fill="#ff0000"/>
</g>
<rect x="509.5" y="802.5" width="151" height="148" fill="none" stroke="#333"/>
<line x1="501" y1="802.5" x2="509" y2="802.5" stroke="#333"/>
<line x1="505" y1="804.5" x2="509" y2="804.5" stroke="#333"/>
<line x1="505" y1="806.5" x2="509" y2="806.5" stroke="#333"/>
<line x1="505" y1="808.5" x2="509" y2="808.5" stroke="#333"/>
<line x1="505" y1="809.5" x2="509" y2="809.5" stroke="#333"/>
<line x1="505" y1="811.5" x2="509" y2="811.5" stroke="#333"/>
<line x1="505" y1="813.5" x2="509" y2="813.5" stroke="#333"/>
<line x1="505" y1="815.5" x2="509" y2="815.5" stroke="#333"/>
<line x1="505" y1="817.5" x2="509" y2="817.5" stroke="#333"/>
<line x1="505" y1="819.5" x2="509" y2="819.5" stroke="#333"/>
<line x1="501" y1="820.5" x2="509" y2="820.5" stroke="#333"/>
<line x1="505" y1="822.5" x2="509" y2="822.5" stroke="#333"/>
<line x1="505" y1="824.5" x2="509" y2="824.5" stroke="#333"/>
<line x1="505" y1="826.5" x2="509" y2="826.5" stroke="#333"/>
<line x1="505" y1="828.5" x2="509" y2="828.5" stroke="#333"/>
<line x1="505" y1="830.5" x2="509" y2="830.5" stroke="#333"/>
<line x1="505" y1="832.5" x2="509" y2="832.5" stroke="#333"/>
<line x1="505" y1="833.5" x2="509" y2="833.5" stroke="#333"/>
<line x1="505" y1="835.5" x2="509" y2="835.5" stroke="#333"/>
<line x1="505" y1="837.5" x2="509" y2="837.5" stroke="#333"/>
<line x1="501" y1="839.5" x2="509" y2="839.5" stroke="#333"/>
<line x1="505" y1="841.5" x2="509" y2="841.5" stroke="#333"/>
<line x1="505" y1="843.5" x2="509" y2="843.5" stroke="#333"/>
<line x1="505" y1="845.5" x2="509" y2="845.5" stroke="#333"/>
<line x1="505" y1="846.5" x2="509" y2="846.5" stroke="#333"/>
<line x1="505" y1="848.5" x2="509" y2="848.5" stroke="#333"/>
<line x1="505" y1="850.5" x2="509" y2="850.5" stroke="#333"/>
<line x1="505" y1="852.5" x2="509" y2="852.5" stroke="#333"/>
<line x1="505" y1="854.5" x2="509" y2="854.5" stroke="#333"/>
<line x1="505" y1="856.5" x2="509" y2="856.5" stroke="#333"/>
<line x1="501" y1="858.5" x2="509" y2="858.5" stroke="#333"/>
<line x1="505" y1="859.5" x2="509" y2="859.5" stroke="#333"/>
<line x1="505" y1="861.5" x2="509" y2="861.5" stroke="#333"/>
<line x1="505" y1="863.5" x2="509" y2="863.5" stroke="#333"/>
<line x1="505" y1="865.5" x2="509" y2="865.5" stroke="#333"/>
<line x1="505" y1="867.5" x2="509" y2="867.5" stroke="#333"/>
<line x1="505" y1="869.5" x2="509" y2="869.5" stroke="#333"/>
<line x1="505" y1="870.5" x2="509" y2="870.5" stroke="#333"/>
<line x1="505" y1="872.5" x2="509" y2="872.5" stroke="#333"/>
<line x1="505" y1="874.5" x2="509" y2="874.5" stroke="#333"/>
<line x1="501" y1="876.5" x2="509" y2="876.5" stroke="#333"/>
<line x1="505" y1="878.5" x2="509" y2="878.5" stroke="#333"/>
<line x1="505" y1="880.5" x2="509" y2="880.5" stroke="#333"/>
<line x1="505" y1="882.5" x2="509" y2="882.5" stroke="#333"/>
<line x1="505" y1="883.5" x2="509" y2="883.5" stroke="#333"/>
<line x1="505" y1="885.5" x2="509" y2="885.5" stroke="#333"/>
<line x1="505" y1="887.5" x2="509" y2="887.5" stroke="#333"/>
<line x1="505" y1="889.5" x2="509" y2="889.5" stroke="#333"/>
<line x1="505" y1="891.5" x2="509" y2="891.5" stroke="#333"/>
<line x1="505" y1="893.5" x2="509" y2="893.5" stroke="#333"/>
<line x1="501" y1="894.5" x2="509" y2="894.5" stroke="#333"/>
<line x1="505" y1="896.5" x2="509" y2="896.5" stroke="#333"/>
<line x1="505" y1="898.5" x2="509" y2="898.5" stroke="#333"/>
<line x1="505" y1="900.5" x2="509" y2="900.5" stroke="#333"/>
<line x1="505" y1="902.5" x2="509" y2="902.5" stroke="#333"/>
<line x1="505" y1="904.5" x2="509" y2="904.5" stroke="#333"/>
<line x1="505" y1="906.5" x2="509" y2="906.5" stroke="#333"/>
<line x1="505" y1="907.5" x2="509" y2="907.5" stroke="#333"/>
<line x1="505" y1="909.5" x2="509" y2="909.5" stroke="#333"/>
<line x1="505" y1="911.5" x2="509" y2="911.5" stroke="#333"/>
<line x1="501" y1="913.5" x2="509" y2="913.5" stroke="#333"/>
<line x1="505" y1="915.5" x2="509" y2="915.5" stroke="#333"/>
<line x1="505" y1="917.5" x2="509" y2="917.5" stroke="#333"/>
<line x1="505" y1="919.5" x2="509" y2="919.5" stroke="#333"/>
<line x1="505" y1="920.5" x2="509" y2="920.5" stroke="#333"/>
<line x1="505" y1="922.5" x2="509" y2="922.5" stroke="#333"/>
<line x1="505" y1="924.5" x2="509" y2="924.5" stroke="#333"/>
<line x1="505" y1="926.5" x2="509" y2="926.5" stroke="#333"/>
<line x1="505" y1="928.5" x2="509" y2="928.5" stroke="#333"/>
<line x1="505" y1="930.5" x2="509" y2="930.5" stroke="#333"/>
<line x1="501" y1="932.5" x2="509" y2="932.5" stroke="#333"/>
<line x1="505" y1="933.5" x2="509" y2="933.5" stroke="#333"/>
<line x1="505" y1="935.5" x2="509" y2="935.5" stroke="#333"/>
<line x1="505" y1="937.5" x2="509" y2="937.5" stroke="#333"/>
<line x1="505" y1="939.5" x2="509" y2="939.5" stroke="#333"/>
<line x1="505" y1="941.5" x2="509" y2="941.5" stroke="#333"/>
<line x1="505" y1="943.5" x2="509" y2="943.5" stroke="#333"/>
<line x1="505" y1="944.5" x2="509" y2="944.5" stroke="#333"/>
<line x1="505" y1="946.5" x2="509" y2="946.5" stroke="#333"/>
<line x1="505" y1="948.5" x2="509" y2="948.5" stroke="#333"/>
<line x1="501" y1="950.5" x2="509" y2="950.5" stroke="#333"/>
<text x="495.5" y="806.9" font-size="12" text-anchor="end" textLength="16.9" lengthAdjust="spacing" fill="#484848">40.</text>
<text x="495.5" y="825.4" font-size="12" text-anchor="end" textLength="16.9" lengthAdjust="spacing" fill="#484848">30.</text>
<text x="495.5" y="843.9" font-size="12" text-anchor="end" textLength="16.9" lengthAdjust="spacing" fill="#484848">20.</text>
<text x="495.5" y="862.4" font-size="12" text-anchor="end" textLength="16.9" lengthAdjust="spacing" fill="#484848">10.</text>
<text x="495.5" y="880.9" font-size="12" text-anchor="end" textLength="10.2" lengthAdjust="spacing" fill="#484848">0.</text>
<text x="495.5" y="899.4" font-size="12" text-anchor="end" textLength="24.7" lengthAdjust="spacing" fill="#484848">−10.</text>
<text x="495.5" y="917.9" font-size="12" text-anchor="end" textLength="24.7" lengthAdjust="spacing" fill="#484848">−20.</text>
<text x="495.5" y="936.4" font-size="12" text-anchor="end" textLength="24.7" lengthAdjust="spacing" fill="#484848">−30.</text>
<text x="495.5" y="954.9" font-size="12" text-anchor="end" textLength="24.7" lengthAdjust="spacing" fill="#484848">−40.</text>
<line x1="509.5" y1="950" x2="509.5" y2="958" stroke="#333"/>
<line x1="528.5" y1="950" x2="528.5" y2="954" stroke="#333"/>
<line x1="547.5" y1="950" x2="547.5" y2="958" stroke="#333"/>
<line x1="566.5" y1="950" x2="566.5" y2="954" stroke="#333"/>
<line x1="584.5" y1="950" x2="584.5" y2="958" stroke="#333"/>
<line x1="603.5" y1="950" x2="603.5" y2="954" stroke="#333"/>
<line x1="622.5" y1="950" x2="622.5" y2="958" stroke="#333"/>
<line x1="641.5" y1="950" x2="641.5" y2="954" stroke="#333"/>
<line x1="660.5" y1="950" x2="660.5" y2="958" stroke="#333"/>
<text x="511.5" y="974.5" font-size="12" text-anchor="middle" textLength="16.9" lengthAdjust="spacing" fill="#484848">40.</text>
<text x="549.2" y="974.5" font-size="12" text-anchor="middle" textLength="16.9" lengthAdjust="spacing" fill="#484848">20.</text>
<text x="587.0" y="974.5" font-size="12" text-anchor="middle" textLength="10.2" lengthAdjust="spacing" fill="#484848">0.</text>
<text x="622.8" y="974.5" font-size="12" text-anchor="middle" textLength="24.7" lengthAdjust="spacing" fill="#484848">−20.</text>
<text x="660.5" y="974.5" font-size="12" text-anchor="middle" textLength="24.7" lengthAdjust="spacing" fill="#484848">−40.</text>
<text x="584.5" y="991.7" font-size="12" text-anchor="middle" textLength="37.5" lengthAdjust="spacing" fill="#484848">KSM–X</text>
<text x="459.5" y="876.0" font-size="12" text-anchor="middle" textLength="38.0" lengthAdjust="spacing" transform="rotate(-90 459.5 876)" fill="#484848">KSM–Z</text>
</g>
<g>
<clipPath id="oc2"><rect x="804" y="803" width="150" height="147"/></clipPath>
<g clip-path="url(#oc2)" shape-rendering="auto">
<ellipse cx="879.0" cy="876.5" rx="88.7" ry="87.0" fill="none" stroke="#0000ff" stroke-width="1.1" stroke-dasharray="2.6,1.3"/>
<ellipse cx="879.0" cy="876.5" rx="47.9" ry="47.25" fill="none" stroke="#8b5a2b" stroke-width="1.1" stroke-dasharray="2.6,1.3"/>
<ellipse cx="880.2" cy="877" rx="38.4" ry="10.3" fill="none" stroke="#000" stroke-width="1.5"/>
<ellipse cx="879.4" cy="876.7" rx="1.8" ry="1.3" fill="none" stroke="#000" stroke-width="1"/>
<path d="M902,890.2 L948.8,915.5" stroke="#000" stroke-width="1.1"/>
<path d="M934.6,908.3 L940.6,911.2" stroke="#0000ff" stroke-width="4.5" stroke-linecap="round"/>
<path d="M931.2,904 L940.2,913 M931.2,913 L940.2,904" stroke="#ff2020" stroke-width="1"/>
<circle cx="891.5" cy="886.4" r="2.6" fill="#ff0000"/>
</g>
<rect x="803.5" y="802.5" width="151" height="148" fill="none" stroke="#333"/>
<line x1="795" y1="802.5" x2="803" y2="802.5" stroke="#333"/>
<line x1="799" y1="804.5" x2="803" y2="804.5" stroke="#333"/>
<line x1="799" y1="806.5" x2="803" y2="806.5" stroke="#333"/>
<line x1="799" y1="808.5" x2="803" y2="808.5" stroke="#333"/>
<line x1="799" y1="809.5" x2="803" y2="809.5" stroke="#333"/>
<line x1="799" y1="811.5" x2="803" y2="811.5" stroke="#333"/>
<line x1="799" y1="813.5" x2="803" y2="813.5" stroke="#333"/>
<line x1="799" y1="815.5" x2="803" y2="815.5" stroke="#333"/>
<line x1="799" y1="817.5" x2="803" y2="817.5" stroke="#333"/>
<line x1="799" y1="819.5" x2="803" y2="819.5" stroke="#333"/>
<line x1="795" y1="820.5" x2="803" y2="820.5" stroke="#333"/>
<line x1="799" y1="822.5" x2="803" y2="822.5" stroke="#333"/>
<line x1="799" y1="824.5" x2="803" y2="824.5" stroke="#333"/>
<line x1="799" y1="826.5" x2="803" y2="826.5" stroke="#333"/>
<line x1="799" y1="828.5" x2="803" y2="828.5" stroke="#333"/>
<line x1="799" y1="830.5" x2="803" y2="830.5" stroke="#333"/>
<line x1="799" y1="832.5" x2="803" y2="832.5" stroke="#333"/>
<line x1="799" y1="833.5" x2="803" y2="833.5" stroke="#333"/>
<line x1="799" y1="835.5" x2="803" y2="835.5" stroke="#333"/>
<line x1="799" y1="837.5" x2="803" y2="837.5" stroke="#333"/>
<line x1="795" y1="839.5" x2="803" y2="839.5" stroke="#333"/>
<line x1="799" y1="841.5" x2="803" y2="841.5" stroke="#333"/>
<line x1="799" y1="843.5" x2="803" y2="843.5" stroke="#333"/>
<line x1="799" y1="845.5" x2="803" y2="845.5" stroke="#333"/>
<line x1="799" y1="846.5" x2="803" y2="846.5" stroke="#333"/>
<line x1="799" y1="848.5" x2="803" y2="848.5" stroke="#333"/>
<line x1="799" y1="850.5" x2="803" y2="850.5" stroke="#333"/>
<line x1="799" y1="852.5" x2="803" y2="852.5" stroke="#333"/>
<line x1="799" y1="854.5" x2="803" y2="854.5" stroke="#333"/>
<line x1="799" y1="856.5" x2="803" y2="856.5" stroke="#333"/>
<line x1="795" y1="858.5" x2="803" y2="858.5" stroke="#333"/>
<line x1="799" y1="859.5" x2="803" y2="859.5" stroke="#333"/>
<line x1="799" y1="861.5" x2="803" y2="861.5" stroke="#333"/>
<line x1="799" y1="863.5" x2="803" y2="863.5" stroke="#333"/>
<line x1="799" y1="865.5" x2="803" y2="865.5" stroke="#333"/>
<line x1="799" y1="867.5" x2="803" y2="867.5" stroke="#333"/>
<line x1="799" y1="869.5" x2="803" y2="869.5" stroke="#333"/>
<line x1="799" y1="870.5" x2="803" y2="870.5" stroke="#333"/>
<line x1="799" y1="872.5" x2="803" y2="872.5" stroke="#333"/>
<line x1="799" y1="874.5" x2="803" y2="874.5" stroke="#333"/>
<line x1="795" y1="876.5" x2="803" y2="876.5" stroke="#333"/>
<line x1="799" y1="878.5" x2="803" y2="878.5" stroke="#333"/>
<line x1="799" y1="880.5" x2="803" y2="880.5" stroke="#333"/>
<line x1="799" y1="882.5" x2="803" y2="882.5" stroke="#333"/>
<line x1="799" y1="883.5" x2="803" y2="883.5" stroke="#333"/>
<line x1="799" y1="885.5" x2="803" y2="885.5" stroke="#333"/>
<line x1="799" y1="887.5" x2="803" y2="887.5" stroke="#333"/>
<line x1="799" y1="889.5" x2="803" y2="889.5" stroke="#333"/>
<line x1="799" y1="891.5" x2="803" y2="891.5" stroke="#333"/>
<line x1="799" y1="893.5" x2="803" y2="893.5" stroke="#333"/>
<line x1="795" y1="894.5" x2="803" y2="894.5" stroke="#333"/>
<line x1="799" y1="896.5" x2="803" y2="896.5" stroke="#333"/>
<line x1="799" y1="898.5" x2="803" y2="898.5" stroke="#333"/>
<line x1="799" y1="900.5" x2="803" y2="900.5" stroke="#333"/>
<line x1="799" y1="902.5" x2="803" y2="902.5" stroke="#333"/>
<line x1="799" y1="904.5" x2="803" y2="904.5" stroke="#333"/>
<line x1="799" y1="906.5" x2="803" y2="906.5" stroke="#333"/>
<line x1="799" y1="907.5" x2="803" y2="907.5" stroke="#333"/>
<line x1="799" y1="909.5" x2="803" y2="909.5" stroke="#333"/>
<line x1="799" y1="911.5" x2="803" y2="911.5" stroke="#333"/>
<line x1="795" y1="913.5" x2="803" y2="913.5" stroke="#333"/>
<line x1="799" y1="915.5" x2="803" y2="915.5" stroke="#333"/>
<line x1="799" y1="917.5" x2="803" y2="917.5" stroke="#333"/>
<line x1="799" y1="919.5" x2="803" y2="919.5" stroke="#333"/>
<line x1="799" y1="920.5" x2="803" y2="920.5" stroke="#333"/>
<line x1="799" y1="922.5" x2="803" y2="922.5" stroke="#333"/>
<line x1="799" y1="924.5" x2="803" y2="924.5" stroke="#333"/>
<line x1="799" y1="926.5" x2="803" y2="926.5" stroke="#333"/>
<line x1="799" y1="928.5" x2="803" y2="928.5" stroke="#333"/>
<line x1="799" y1="930.5" x2="803" y2="930.5" stroke="#333"/>
<line x1="795" y1="932.5" x2="803" y2="932.5" stroke="#333"/>
<line x1="799" y1="933.5" x2="803" y2="933.5" stroke="#333"/>
<line x1="799" y1="935.5" x2="803" y2="935.5" stroke="#333"/>
<line x1="799" y1="937.5" x2="803" y2="937.5" stroke="#333"/>
<line x1="799" y1="939.5" x2="803" y2="939.5" stroke="#333"/>
<line x1="799" y1="941.5" x2="803" y2="941.5" stroke="#333"/>
<line x1="799" y1="943.5" x2="803" y2="943.5" stroke="#333"/>
<line x1="799" y1="944.5" x2="803" y2="944.5" stroke="#333"/>
<line x1="799" y1="946.5" x2="803" y2="946.5" stroke="#333"/>
<line x1="799" y1="948.5" x2="803" y2="948.5" stroke="#333"/>
<line x1="795" y1="950.5" x2="803" y2="950.5" stroke="#333"/>
<text x="789.5" y="806.9" font-size="12" text-anchor="end" textLength="16.9" lengthAdjust="spacing" fill="#484848">40.</text>
<text x="789.5" y="825.4" font-size="12" text-anchor="end" textLength="16.9" lengthAdjust="spacing" fill="#484848">30.</text>
<text x="789.5" y="843.9" font-size="12" text-anchor="end" textLength="16.9" lengthAdjust="spacing" fill="#484848">20.</text>
<text x="789.5" y="862.4" font-size="12" text-anchor="end" textLength="16.9" lengthAdjust="spacing" fill="#484848">10.</text>
<text x="789.5" y="880.9" font-size="12" text-anchor="end" textLength="10.2" lengthAdjust="spacing" fill="#484848">0.</text>
<text x="789.5" y="899.4" font-size="12" text-anchor="end" textLength="24.7" lengthAdjust="spacing" fill="#484848">−10.</text>
<text x="789.5" y="917.9" font-size="12" text-anchor="end" textLength="24.7" lengthAdjust="spacing" fill="#484848">−20.</text>
<text x="789.5" y="936.4" font-size="12" text-anchor="end" textLength="24.7" lengthAdjust="spacing" fill="#484848">−30.</text>
<text x="789.5" y="954.9" font-size="12" text-anchor="end" textLength="24.7" lengthAdjust="spacing" fill="#484848">−40.</text>
<line x1="803.5" y1="950" x2="803.5" y2="958" stroke="#333"/>
<line x1="822.5" y1="950" x2="822.5" y2="954" stroke="#333"/>
<line x1="841.5" y1="950" x2="841.5" y2="958" stroke="#333"/>
<line x1="860.5" y1="950" x2="860.5" y2="954" stroke="#333"/>
<line x1="878.5" y1="950" x2="878.5" y2="958" stroke="#333"/>
<line x1="897.5" y1="950" x2="897.5" y2="954" stroke="#333"/>
<line x1="916.5" y1="950" x2="916.5" y2="958" stroke="#333"/>
<line x1="935.5" y1="950" x2="935.5" y2="954" stroke="#333"/>
<line x1="954.5" y1="950" x2="954.5" y2="958" stroke="#333"/>
<text x="803.5" y="974.5" font-size="12" text-anchor="middle" textLength="24.7" lengthAdjust="spacing" fill="#484848">−40.</text>
<text x="841.2" y="974.5" font-size="12" text-anchor="middle" textLength="24.7" lengthAdjust="spacing" fill="#484848">−20.</text>
<text x="881.0" y="974.5" font-size="12" text-anchor="middle" textLength="10.2" lengthAdjust="spacing" fill="#484848">0.</text>
<text x="918.8" y="974.5" font-size="12" text-anchor="middle" textLength="16.9" lengthAdjust="spacing" fill="#484848">20.</text>
<text x="956.5" y="974.5" font-size="12" text-anchor="middle" textLength="16.9" lengthAdjust="spacing" fill="#484848">40.</text>
<text x="878.5" y="991.7" font-size="12" text-anchor="middle" textLength="37.5" lengthAdjust="spacing" fill="#484848">KSM–Y</text>
<text x="753.5" y="876.0" font-size="12" text-anchor="middle" textLength="38.0" lengthAdjust="spacing" transform="rotate(-90 753.5 876)" fill="#484848">KSM–Z</text>
</g>
</svg></body></html>
